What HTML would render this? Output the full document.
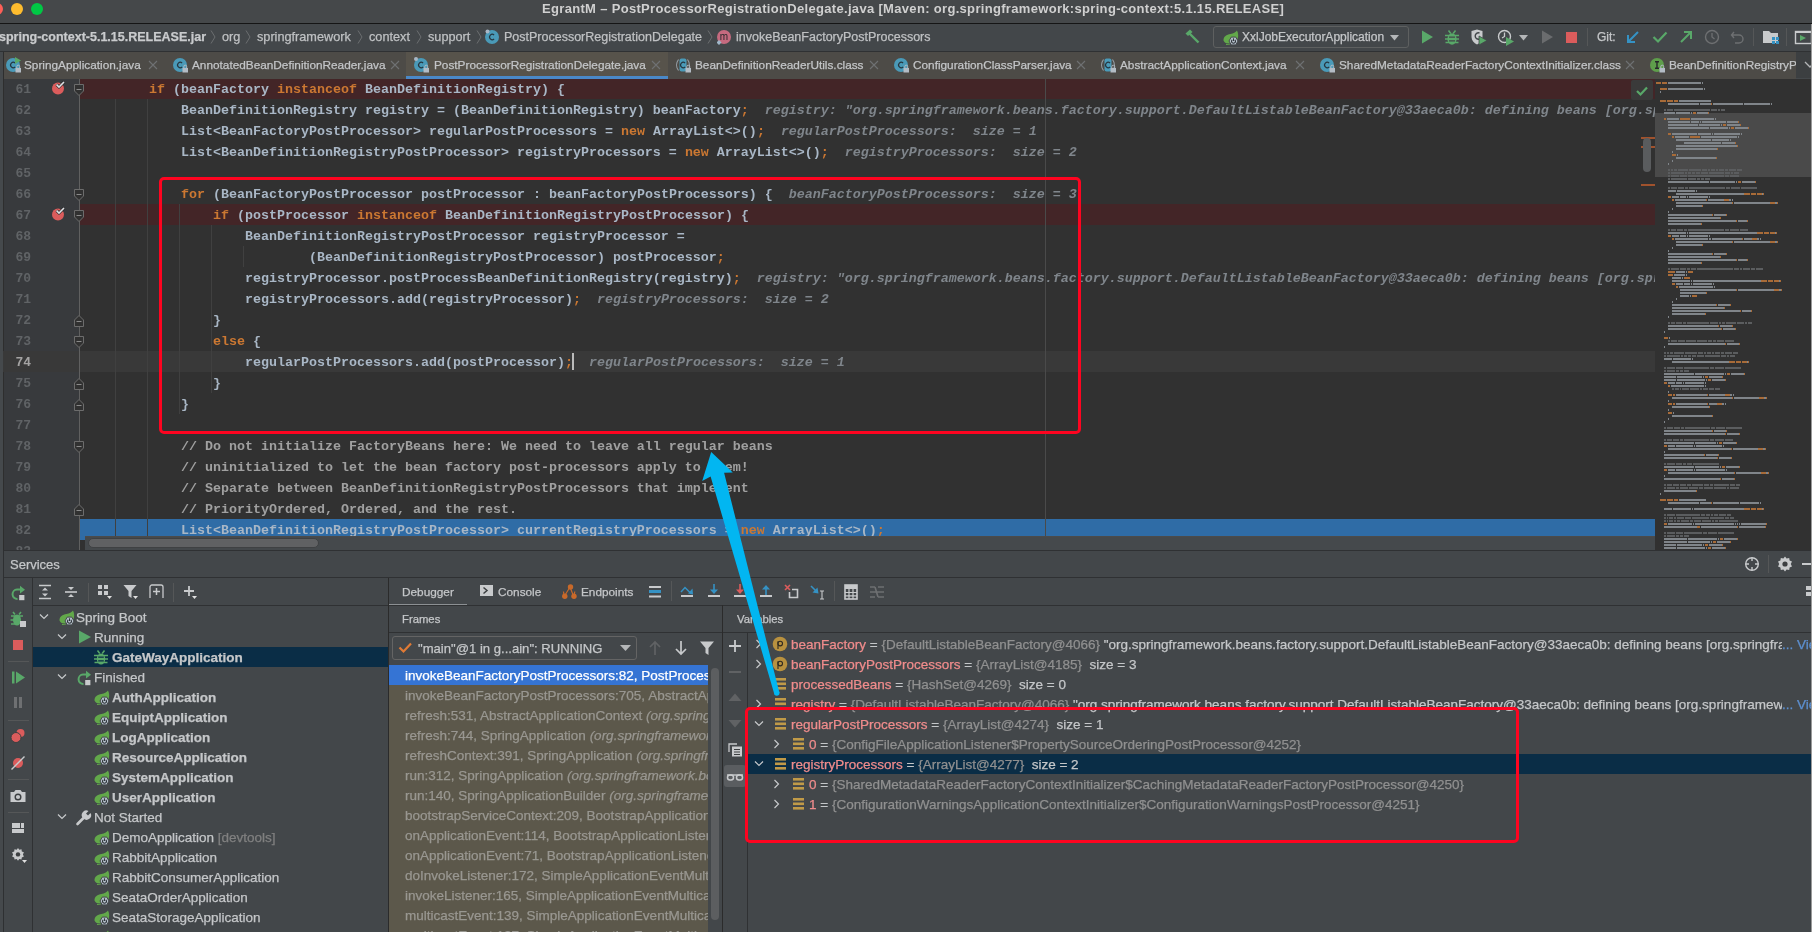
<!DOCTYPE html><html><head><meta charset="utf-8"><style>
*{box-sizing:border-box;margin:0;padding:0}
html,body{width:1812px;height:932px;overflow:hidden;background:#3c3f41}
body{will-change:transform;position:relative;font-family:"Liberation Sans",sans-serif;font-size:13px;color:#bbbbbb}
.a{position:absolute}
.t{position:absolute;white-space:pre;line-height:16px;-webkit-text-stroke:0.25px currentColor}
.mono{font-family:"Liberation Mono",monospace}
.code{position:absolute;left:85px;width:1570px;height:21px;line-height:23px;white-space:pre;overflow:hidden;font-family:"Liberation Mono",monospace;font-size:13.333px;color:#a9b7c6;font-weight:700}
.kw{color:#cc7832}
.cm{color:#a0a0a0}
.hint{color:#7f858b;font-style:italic}
.ln{position:absolute;left:3px;width:28px;text-align:right;height:21px;line-height:23px;font-family:"Liberation Mono",monospace;font-size:13px;font-weight:700}

</style></head><body><div class="a" style="left:0px;top:0px;width:1812px;height:23px;background:#45484a;"></div>
<div class="a" style="left:0px;top:23px;width:1812px;height:1px;background:#151515;"></div>
<div class="a" style="left:-9px;top:3px;width:12px;height:12px;border-radius:50%;background:#fe5f57"></div>
<div class="a" style="left:11px;top:3px;width:12px;height:12px;border-radius:50%;background:#febc2e"></div>
<div class="a" style="left:31px;top:3px;width:12px;height:12px;border-radius:50%;background:#00c845"></div>
<div class="t" style="left:542px;top:1px;color:#d0d0d0;font-size:13px;font-weight:700;letter-spacing:0.32px;-webkit-text-stroke:0">EgrantM – PostProcessorRegistrationDelegate.java [Maven: org.springframework:spring-context:5.1.15.RELEASE]</div>
<div class="a" style="left:0px;top:24px;width:1812px;height:27px;background:#43474a;"></div>
<div class="a" style="left:0px;top:51px;width:1812px;height:1px;background:#2f3133;"></div>
<div class="t" style="left:-1px;top:29px;color:#c9cbcd;font-size:12.5px;font-weight:700;">spring-context-5.1.15.RELEASE.jar</div>
<svg class="a" style="left:210px;top:29px" width="7" height="16" viewBox="0 0 7 16"><path d="M1,1.5 L5,8 L1,14.5" fill="none" stroke="#6b6e70" stroke-width="1"/></svg>
<div class="t" style="left:222px;top:29px;color:#bfc1c3;font-size:12.7px;font-weight:400;">org</div>
<svg class="a" style="left:245px;top:29px" width="7" height="16" viewBox="0 0 7 16"><path d="M1,1.5 L5,8 L1,14.5" fill="none" stroke="#6b6e70" stroke-width="1"/></svg>
<div class="t" style="left:257px;top:29px;color:#bfc1c3;font-size:12.7px;font-weight:400;">springframework</div>
<svg class="a" style="left:357px;top:29px" width="7" height="16" viewBox="0 0 7 16"><path d="M1,1.5 L5,8 L1,14.5" fill="none" stroke="#6b6e70" stroke-width="1"/></svg>
<div class="t" style="left:369px;top:29px;color:#bfc1c3;font-size:12.7px;font-weight:400;">context</div>
<svg class="a" style="left:416px;top:29px" width="7" height="16" viewBox="0 0 7 16"><path d="M1,1.5 L5,8 L1,14.5" fill="none" stroke="#6b6e70" stroke-width="1"/></svg>
<div class="t" style="left:428px;top:29px;color:#bfc1c3;font-size:12.7px;font-weight:400;">support</div>
<svg class="a" style="left:476px;top:29px" width="7" height="16" viewBox="0 0 7 16"><path d="M1,1.5 L5,8 L1,14.5" fill="none" stroke="#6b6e70" stroke-width="1"/></svg>
<svg class="a" style="left:485px;top:29px" width="17" height="16" viewBox="0 0 17 16"><circle cx="7" cy="8" r="7" fill="#4a9ab8"/><path d="M9.1,6 A2.7,2.7 0 1 0 9.1,10" fill="none" stroke="#263640" stroke-width="1.2"/><circle cx="2.5" cy="2.5" r="2" fill="#a9b7c6"/></svg>
<div class="t" style="left:504px;top:29px;color:#bfc1c3;font-size:12.5px;font-weight:400;">PostProcessorRegistrationDelegate</div>
<svg class="a" style="left:707px;top:29px" width="7" height="16" viewBox="0 0 7 16"><path d="M1,1.5 L5,8 L1,14.5" fill="none" stroke="#6b6e70" stroke-width="1"/></svg>
<svg class="a" style="left:717px;top:29px" width="17" height="16" viewBox="0 0 17 16"><circle cx="7" cy="8" r="7" fill="#c56a7f"/><text x="7" y="11" font-size="10" text-anchor="middle" fill="#26282a" font-family="Liberation Sans">m</text><path d="M2,11 L4.5,13.5 L2,16 L-0.5,13.5Z" fill="#9fb7c9"/></svg>
<div class="t" style="left:736px;top:29px;color:#bfc1c3;font-size:12.5px;font-weight:400;">invokeBeanFactoryPostProcessors</div>
<svg class="a" style="left:1184px;top:28px" width="18" height="18" viewBox="0 0 18 18"><path d="M1.5,5.5 L6,1.5 L8.5,4 L4,8Z" fill="#59a869"/><path d="M5.5,5.5 L14.5,14.5" stroke="#59a869" stroke-width="2.4"/></svg>
<div class="a" style="left:1213px;top:26px;width:196px;height:22px;border:1px solid #5e6060;border-radius:3px"></div>
<svg class="a" style="left:1222px;top:29px" width="18" height="18" viewBox="0 0 18 18"><path d="M1.5,11.5 C1.5,7.5 4.5,5.5 8.5,5 C11.5,4.5 13.5,3.5 15,1.5 C16.5,4.5 16.5,8 15.5,10 L9,13 C7,15 3,15 1.5,11.5 Z" fill="#62a84a"/><path d="M4,15.5 L8,15" stroke="#62a84a" stroke-width="1"/><path d="M7,12 L9.25,8.1 L13.75,8.1 L16,12 L13.75,15.9 L9.25,15.9Z" fill="#b4c0ca" stroke="#43474a" stroke-width="1"/><path d="M10.2,10.8 A2,2 0 1 0 12.8,10.8" fill="none" stroke="#30343a" stroke-width="1.1"/><path d="M11.5,9.3 V12" stroke="#30343a" stroke-width="1.1"/></svg>
<div class="t" style="left:1242px;top:29px;color:#c5c7c9;font-size:12px;font-weight:400;">XxlJobExecutorApplication</div>
<svg class="a" style="left:1389px;top:34px" width="12" height="8" viewBox="0 0 12 8"><path d="M1,1 H10 L5.5,6.5Z" fill="#b4b6b8"/></svg>
<svg class="a" style="left:1418px;top:28px" width="18" height="18" viewBox="0 0 18 18"><path d="M4,2.5 L15,9 L4,15.5Z" fill="#59a869"/></svg>
<svg class="a" style="left:1444px;top:29px" width="17" height="17" viewBox="0 0 17 17"><ellipse cx="8" cy="10" rx="4.6" ry="5.8" fill="#59a869"/><path d="M1,6.5 H15 M1,10 H15 M1.5,13.5 H14.5" stroke="#59a869" stroke-width="1.7"/><path d="M4.5,1.5 L6.8,4.5 M11.5,1.5 L9.2,4.5" stroke="#59a869" stroke-width="1.5"/><path d="M5,8.2 H11 M5,11.8 H11" stroke="#43474a" stroke-width="1.2"/></svg>
<svg class="a" style="left:1470px;top:28px" width="20" height="18" viewBox="0 0 20 18"><path d="M1.5,3 L7,1.5 L12.5,3 V9 C12.5,12.5 10,15 7,16.5 C4,15 1.5,12.5 1.5,9 Z" fill="#c8cacc"/><path d="M9.5,5 A3.2,3.2 0 1 0 9.5,11" fill="none" stroke="#43474a" stroke-width="1.4"/><path d="M9,8 L17,12.5 L9,17Z" fill="#59a869" stroke="#43474a" stroke-width="0.8"/></svg>
<svg class="a" style="left:1497px;top:28px" width="20" height="18" viewBox="0 0 20 18"><circle cx="7.5" cy="8.5" r="6" fill="none" stroke="#c8cacc" stroke-width="1.4"/><path d="M7.5,4.5 V8.5 L5,10" fill="none" stroke="#c8cacc" stroke-width="1.3"/><path d="M9,9 L17,13.5 L9,18Z" fill="#59a869"/></svg>
<svg class="a" style="left:1518px;top:34px" width="12" height="8" viewBox="0 0 12 8"><path d="M1,1 H10 L5.5,6.5Z" fill="#b4b6b8"/></svg>
<svg class="a" style="left:1538px;top:28px" width="18" height="18" viewBox="0 0 18 18"><path d="M4,2.5 L15,9 L4,15.5Z" fill="#6a6c6e"/></svg>
<div class="a" style="left:1566px;top:32px;width:11px;height:11px;background:#db5c5c;"></div>
<div class="a" style="left:1587px;top:28px;width:1px;height:18px;background:#555758;"></div>
<div class="t" style="left:1597px;top:29px;color:#c5c7c9;font-size:12px;font-weight:400;">Git:</div>
<svg class="a" style="left:1624px;top:28px" width="18" height="18" viewBox="0 0 18 18"><path d="M14,4 L4,14 M4,7 V14 H11" fill="none" stroke="#3592c4" stroke-width="2"/></svg>
<svg class="a" style="left:1651px;top:28px" width="18" height="18" viewBox="0 0 18 18"><path d="M2.5,9 L7,13.5 L15.5,4.5" fill="none" stroke="#59a869" stroke-width="2.2"/></svg>
<svg class="a" style="left:1677px;top:28px" width="18" height="18" viewBox="0 0 18 18"><path d="M4,14 L14,4 M7,4 H14 V11" fill="none" stroke="#59a869" stroke-width="2"/></svg>
<svg class="a" style="left:1703px;top:28px" width="18" height="18" viewBox="0 0 18 18"><circle cx="9" cy="9" r="6.5" fill="none" stroke="#6e7072" stroke-width="1.4"/><path d="M9,5 V9 L11.5,11" fill="none" stroke="#6e7072" stroke-width="1.3"/></svg>
<svg class="a" style="left:1729px;top:28px" width="18" height="18" viewBox="0 0 18 18"><path d="M5,4 L2.5,7 L5,10 M3,7 H10 A4,4 0 0 1 10,15 H6" fill="none" stroke="#6e7072" stroke-width="1.4"/></svg>
<div class="a" style="left:1753px;top:28px;width:1px;height:18px;background:#555758;"></div>
<svg class="a" style="left:1761px;top:28px" width="20" height="18" viewBox="0 0 20 18"><path d="M2,3 H8 L10,5 H17 V15 H2 Z" fill="#c8cacc"/><rect x="11" y="9" width="3" height="3" fill="#3592c4"/><rect x="15" y="9" width="3" height="3" fill="#3592c4"/><rect x="11" y="13" width="3" height="3" fill="#3592c4"/><rect x="15" y="13" width="3" height="3" fill="#3592c4"/></svg>
<div class="a" style="left:1786px;top:28px;width:1px;height:18px;background:#555758;"></div>
<svg class="a" style="left:1794px;top:28px" width="18" height="18" viewBox="0 0 18 18"><rect x="1.5" y="3.5" width="16" height="12" fill="none" stroke="#c8cacc" stroke-width="1.4"/><rect x="1" y="3" width="17" height="2" fill="#c8cacc"/><path d="M6,7 L12,10 L6,13Z" fill="#59a869"/></svg>
<div class="a" style="left:0px;top:52px;width:1812px;height:26px;background:#4d4b47;"></div>
<div class="a" style="left:0px;top:52px;width:3px;height:26px;background:#45494c;"></div>
<div class="a" style="left:3px;top:52px;width:1px;height:26px;background:#2e2e2e;"></div>
<div class="a" style="left:1796px;top:52px;width:15px;height:26px;background:#3c3f41;"></div>
<div class="a" style="left:406px;top:52px;width:262px;height:26px;background:#57534b;"></div>
<div class="a" style="left:406px;top:76px;width:262px;height:3px;background:#4a88c7;"></div>
<svg class="a" style="left:6px;top:57px" width="17" height="16" viewBox="0 0 17 16"><circle cx="7" cy="8" r="7" fill="#4a9ab8"/><path d="M9.1,6 A2.7,2.7 0 1 0 9.1,10" fill="none" stroke="#263640" stroke-width="1.2"/><path d="M9,0 L15,3.5 L9,7Z" fill="#59a869"/><rect x="9.5" y="11" width="5.5" height="4.5" fill="#b3bcc5"/><path d="M10.8,11.2 V9.6 a1.45,1.45 0 0 1 2.9,0 V11.2" fill="none" stroke="#b3bcc5" stroke-width="1"/></svg>
<div class="t" style="left:24px;top:57px;color:#c3c5c7;font-size:11.8px;font-weight:400;">SpringApplication.java</div>
<svg class="a" style="left:148px;top:60px" width="10" height="10" viewBox="0 0 10 10"><path d="M1,1 L9,9 M9,1 L1,9" stroke="#6f7173" stroke-width="1.1"/></svg>
<svg class="a" style="left:173px;top:57px" width="17" height="16" viewBox="0 0 17 16"><circle cx="7" cy="8" r="7" fill="#4a9ab8"/><path d="M9.1,6 A2.7,2.7 0 1 0 9.1,10" fill="none" stroke="#263640" stroke-width="1.2"/><rect x="9.5" y="11" width="5.5" height="4.5" fill="#b3bcc5"/><path d="M10.8,11.2 V9.6 a1.45,1.45 0 0 1 2.9,0 V11.2" fill="none" stroke="#b3bcc5" stroke-width="1"/></svg>
<div class="t" style="left:192px;top:57px;color:#c3c5c7;font-size:11.8px;font-weight:400;">AnnotatedBeanDefinitionReader.java</div>
<svg class="a" style="left:390px;top:60px" width="10" height="10" viewBox="0 0 10 10"><path d="M1,1 L9,9 M9,1 L1,9" stroke="#6f7173" stroke-width="1.1"/></svg>
<svg class="a" style="left:414px;top:57px" width="17" height="16" viewBox="0 0 17 16"><circle cx="7" cy="8" r="7" fill="#4a9ab8"/><path d="M9.1,6 A2.7,2.7 0 1 0 9.1,10" fill="none" stroke="#263640" stroke-width="1.2"/><circle cx="2" cy="2" r="2" fill="#a9b7c6"/><rect x="9.5" y="11" width="5.5" height="4.5" fill="#b3bcc5"/><path d="M10.8,11.2 V9.6 a1.45,1.45 0 0 1 2.9,0 V11.2" fill="none" stroke="#b3bcc5" stroke-width="1"/></svg>
<div class="t" style="left:434px;top:57px;color:#c3c5c7;font-size:11.8px;font-weight:400;">PostProcessorRegistrationDelegate.java</div>
<svg class="a" style="left:651px;top:60px" width="10" height="10" viewBox="0 0 10 10"><path d="M1,1 L9,9 M9,1 L1,9" stroke="#6f7173" stroke-width="1.1"/></svg>
<svg class="a" style="left:676px;top:57px" width="17" height="16" viewBox="0 0 17 16"><circle cx="7" cy="8" r="7" fill="#4a9ab8"/><path d="M9.1,6 A2.7,2.7 0 1 0 9.1,10" fill="none" stroke="#263640" stroke-width="1.2"/><rect x="-1" y="0" width="16" height="16" fill="#4d4b47"/><path d="M2.5,2.5 A9,9 0 0 0 2.5,13.5 M11.5,2.5 A9,9 0 0 1 11.5,13.5" fill="none" stroke="#9aa3ab" stroke-width="1.1"/><rect x="3.5" y="1.5" width="7" height="13" rx="2" fill="#4a9ab8"/><path d="M9.1,6 A2.7,2.7 0 1 0 9.1,10" fill="none" stroke="#263640" stroke-width="1.2"/><rect x="9.5" y="11" width="5.5" height="4.5" fill="#b3bcc5"/><path d="M10.8,11.2 V9.6 a1.45,1.45 0 0 1 2.9,0 V11.2" fill="none" stroke="#b3bcc5" stroke-width="1"/></svg>
<div class="t" style="left:695px;top:57px;color:#c3c5c7;font-size:11.8px;font-weight:400;">BeanDefinitionReaderUtils.class</div>
<svg class="a" style="left:869px;top:60px" width="10" height="10" viewBox="0 0 10 10"><path d="M1,1 L9,9 M9,1 L1,9" stroke="#6f7173" stroke-width="1.1"/></svg>
<svg class="a" style="left:894px;top:57px" width="17" height="16" viewBox="0 0 17 16"><circle cx="7" cy="8" r="7" fill="#4a9ab8"/><path d="M9.1,6 A2.7,2.7 0 1 0 9.1,10" fill="none" stroke="#263640" stroke-width="1.2"/><rect x="9.5" y="11" width="5.5" height="4.5" fill="#b3bcc5"/><path d="M10.8,11.2 V9.6 a1.45,1.45 0 0 1 2.9,0 V11.2" fill="none" stroke="#b3bcc5" stroke-width="1"/></svg>
<div class="t" style="left:913px;top:57px;color:#c3c5c7;font-size:11.8px;font-weight:400;">ConfigurationClassParser.java</div>
<svg class="a" style="left:1076px;top:60px" width="10" height="10" viewBox="0 0 10 10"><path d="M1,1 L9,9 M9,1 L1,9" stroke="#6f7173" stroke-width="1.1"/></svg>
<svg class="a" style="left:1101px;top:57px" width="17" height="16" viewBox="0 0 17 16"><circle cx="7" cy="8" r="7" fill="#4a9ab8"/><path d="M9.1,6 A2.7,2.7 0 1 0 9.1,10" fill="none" stroke="#263640" stroke-width="1.2"/><rect x="-1" y="0" width="16" height="16" fill="#4d4b47"/><path d="M2.5,2.5 A9,9 0 0 0 2.5,13.5 M11.5,2.5 A9,9 0 0 1 11.5,13.5" fill="none" stroke="#9aa3ab" stroke-width="1.1"/><rect x="3.5" y="1.5" width="7" height="13" rx="2" fill="#4a9ab8"/><path d="M9.1,6 A2.7,2.7 0 1 0 9.1,10" fill="none" stroke="#263640" stroke-width="1.2"/><rect x="9.5" y="11" width="5.5" height="4.5" fill="#b3bcc5"/><path d="M10.8,11.2 V9.6 a1.45,1.45 0 0 1 2.9,0 V11.2" fill="none" stroke="#b3bcc5" stroke-width="1"/></svg>
<div class="t" style="left:1120px;top:57px;color:#c3c5c7;font-size:11.8px;font-weight:400;">AbstractApplicationContext.java</div>
<svg class="a" style="left:1295px;top:60px" width="10" height="10" viewBox="0 0 10 10"><path d="M1,1 L9,9 M9,1 L1,9" stroke="#6f7173" stroke-width="1.1"/></svg>
<svg class="a" style="left:1320px;top:57px" width="17" height="16" viewBox="0 0 17 16"><circle cx="7" cy="8" r="7" fill="#4a9ab8"/><path d="M9.1,6 A2.7,2.7 0 1 0 9.1,10" fill="none" stroke="#263640" stroke-width="1.2"/><rect x="9.5" y="11" width="5.5" height="4.5" fill="#b3bcc5"/><path d="M10.8,11.2 V9.6 a1.45,1.45 0 0 1 2.9,0 V11.2" fill="none" stroke="#b3bcc5" stroke-width="1"/></svg>
<div class="t" style="left:1339px;top:57px;color:#c3c5c7;font-size:11.8px;font-weight:400;">SharedMetadataReaderFactoryContextInitializer.class</div>
<svg class="a" style="left:1625px;top:60px" width="10" height="10" viewBox="0 0 10 10"><path d="M1,1 L9,9 M9,1 L1,9" stroke="#6f7173" stroke-width="1.1"/></svg>
<div class="a" style="left:1650px;top:52px;width:146px;height:26px;overflow:hidden"><svg class="a" style="left:0px;top:5px" width="17" height="16" viewBox="0 0 17 16"><circle cx="7" cy="8" r="7" fill="#5e9e4b"/><path d="M5,4.8 H9 M7,4.8 V11.2 M5,11.2 H9" fill="none" stroke="#26282a" stroke-width="1.4"/><rect x="9.5" y="11" width="5.5" height="4.5" fill="#b3bcc5"/><path d="M10.8,11.2 V9.6 a1.45,1.45 0 0 1 2.9,0 V11.2" fill="none" stroke="#b3bcc5" stroke-width="1"/></svg><div class="t" style="left:19px;top:5px;color:#c3c5c7;font-size:11.8px">BeanDefinitionRegistryPostProcessor.class</div></div>
<svg class="a" style="left:1804px;top:60px" width="12" height="10" viewBox="0 0 12 10"><path d="M1,2 L6,7 L11,2" fill="none" stroke="#b4b6b8" stroke-width="1.3"/></svg>
<div class="a" style="left:0px;top:79px;width:3px;height:471px;background:#45494c;"></div>
<div class="a" style="left:3px;top:79px;width:1px;height:471px;background:#2e2e2e;"></div>
<div class="a" style="left:4px;top:79px;width:76px;height:471px;background:#383a3d;"></div>
<div class="a" style="left:80px;top:79px;width:1575px;height:471px;background:#313131;"></div>
<div class="a" style="left:1655px;top:79px;width:157px;height:471px;background:#313131;"></div>
<div class="a" style="left:80px;top:78px;width:1575px;height:21px;background:#432527;"></div>
<div class="a" style="left:80px;top:204px;width:1575px;height:21px;background:#432527;"></div>
<div class="a" style="left:3px;top:351px;width:1652px;height:21px;background:#393939;"></div>
<div class="a" style="left:80px;top:519px;width:1575px;height:21px;background:#2f6ca6;"></div>
<div class="a" style="left:115px;top:99px;width:1px;height:441px;background:#404040;"></div>
<div class="a" style="left:147px;top:99px;width:1px;height:441px;background:#404040;"></div>
<div class="a" style="left:179px;top:204px;width:1px;height:210px;background:#404040;"></div>
<div class="a" style="left:211px;top:225px;width:1px;height:168px;background:#404040;"></div>
<div class="a" style="left:243px;top:246px;width:1px;height:21px;background:#404040;"></div>
<div class="a" style="left:1045px;top:79px;width:1px;height:458px;background:#4a4a4a;"></div>
<div class="code" style="top:78px">        <span class="kw">if</span> (beanFactory <span class="kw">instanceof</span> BeanDefinitionRegistry) {</div>
<div class="ln" style="top:78px;color:#606366">61</div>
<div class="code" style="top:99px">            BeanDefinitionRegistry registry = (BeanDefinitionRegistry) beanFactory<span class="kw">;</span>  <span class="hint">registry: &quot;org.springframework.beans.factory.support.DefaultListableBeanFactory@33aeca0b: defining beans [org.springframework.context.annotation.internalConfigurationAnnotationProcessor</span></div>
<div class="ln" style="top:99px;color:#606366">62</div>
<div class="code" style="top:120px">            List&lt;BeanFactoryPostProcessor&gt; regularPostProcessors = <span class="kw">new</span> ArrayList&lt;&gt;()<span class="kw">;</span>  <span class="hint">regularPostProcessors:  size = 1</span></div>
<div class="ln" style="top:120px;color:#606366">63</div>
<div class="code" style="top:141px">            List&lt;BeanDefinitionRegistryPostProcessor&gt; registryProcessors = <span class="kw">new</span> ArrayList&lt;&gt;()<span class="kw">;</span>  <span class="hint">registryProcessors:  size = 2</span></div>
<div class="ln" style="top:141px;color:#606366">64</div>
<div class="code" style="top:162px"></div>
<div class="ln" style="top:162px;color:#606366">65</div>
<div class="code" style="top:183px">            <span class="kw">for</span> (BeanFactoryPostProcessor postProcessor : beanFactoryPostProcessors) {  <span class="hint">beanFactoryPostProcessors:  size = 3</span></div>
<div class="ln" style="top:183px;color:#606366">66</div>
<div class="code" style="top:204px">                <span class="kw">if</span> (postProcessor <span class="kw">instanceof</span> BeanDefinitionRegistryPostProcessor) {</div>
<div class="ln" style="top:204px;color:#606366">67</div>
<div class="code" style="top:225px">                    BeanDefinitionRegistryPostProcessor registryProcessor =</div>
<div class="ln" style="top:225px;color:#606366">68</div>
<div class="code" style="top:246px">                            (BeanDefinitionRegistryPostProcessor) postProcessor<span class="kw">;</span></div>
<div class="ln" style="top:246px;color:#606366">69</div>
<div class="code" style="top:267px">                    registryProcessor.postProcessBeanDefinitionRegistry(registry)<span class="kw">;</span>  <span class="hint">registry: &quot;org.springframework.beans.factory.support.DefaultListableBeanFactory@33aeca0b: defining beans [org.springframework.context.annotation.internalConfigurationAnnotationProcessor</span></div>
<div class="ln" style="top:267px;color:#606366">70</div>
<div class="code" style="top:288px">                    registryProcessors.add(registryProcessor)<span class="kw">;</span>  <span class="hint">registryProcessors:  size = 2</span></div>
<div class="ln" style="top:288px;color:#606366">71</div>
<div class="code" style="top:309px">                }</div>
<div class="ln" style="top:309px;color:#606366">72</div>
<div class="code" style="top:330px">                <span class="kw">else</span> {</div>
<div class="ln" style="top:330px;color:#606366">73</div>
<div class="code" style="top:351px">                    regularPostProcessors.add(postProcessor)<span class="kw">;</span>  <span class="hint">regularPostProcessors:  size = 1</span></div>
<div class="ln" style="top:351px;color:#a4a3a3">74</div>
<div class="code" style="top:372px">                }</div>
<div class="ln" style="top:372px;color:#606366">75</div>
<div class="code" style="top:393px">            }</div>
<div class="ln" style="top:393px;color:#606366">76</div>
<div class="code" style="top:414px"></div>
<div class="ln" style="top:414px;color:#606366">77</div>
<div class="code" style="top:435px"><span class="cm">            // Do not initialize FactoryBeans here: We need to leave all regular beans</span></div>
<div class="ln" style="top:435px;color:#606366">78</div>
<div class="code" style="top:456px"><span class="cm">            // uninitialized to let the bean factory post-processors apply to them!</span></div>
<div class="ln" style="top:456px;color:#606366">79</div>
<div class="code" style="top:477px"><span class="cm">            // Separate between BeanDefinitionRegistryPostProcessors that implement</span></div>
<div class="ln" style="top:477px;color:#606366">80</div>
<div class="code" style="top:498px"><span class="cm">            // PriorityOrdered, Ordered, and the rest.</span></div>
<div class="ln" style="top:498px;color:#606366">81</div>
<div class="code" style="top:519px">            List&lt;BeanDefinitionRegistryPostProcessor&gt; currentRegistryProcessors = <span class="kw">new</span> ArrayList&lt;&gt;()<span class="kw">;</span></div>
<div class="ln" style="top:519px;color:#606366">82</div>
<div class="code" style="top:540px"></div>
<div class="ln" style="top:540px;color:#606366">83</div>
<div class="a" style="left:79px;top:79px;width:1px;height:471px;background:#606060;"></div>
<svg class="a" style="left:74px;top:84px" width="10" height="12"><path d="M0.5,0.5 H9.5 V7 L5,11.5 L0.5,7 Z" fill="#313131" stroke="#6c6c6c" stroke-width="1"/><rect x="2.5" y="5" width="5" height="1" fill="#8a8a8a"/></svg>
<svg class="a" style="left:74px;top:189px" width="10" height="12"><path d="M0.5,0.5 H9.5 V7 L5,11.5 L0.5,7 Z" fill="#313131" stroke="#6c6c6c" stroke-width="1"/><rect x="2.5" y="5" width="5" height="1" fill="#8a8a8a"/></svg>
<svg class="a" style="left:74px;top:210px" width="10" height="12"><path d="M0.5,0.5 H9.5 V7 L5,11.5 L0.5,7 Z" fill="#313131" stroke="#6c6c6c" stroke-width="1"/><rect x="2.5" y="5" width="5" height="1" fill="#8a8a8a"/></svg>
<svg class="a" style="left:74px;top:336px" width="10" height="12"><path d="M0.5,0.5 H9.5 V7 L5,11.5 L0.5,7 Z" fill="#313131" stroke="#6c6c6c" stroke-width="1"/><rect x="2.5" y="5" width="5" height="1" fill="#8a8a8a"/></svg>
<svg class="a" style="left:74px;top:441px" width="10" height="12"><path d="M0.5,0.5 H9.5 V7 L5,11.5 L0.5,7 Z" fill="#313131" stroke="#6c6c6c" stroke-width="1"/><rect x="2.5" y="5" width="5" height="1" fill="#8a8a8a"/></svg>
<svg class="a" style="left:74px;top:315px" width="10" height="12"><path d="M0.5,11.5 H9.5 V5 L5,0.5 L0.5,5 Z" fill="#313131" stroke="#6c6c6c" stroke-width="1"/><rect x="2.5" y="6" width="5" height="1" fill="#8a8a8a"/></svg>
<svg class="a" style="left:74px;top:378px" width="10" height="12"><path d="M0.5,11.5 H9.5 V5 L5,0.5 L0.5,5 Z" fill="#313131" stroke="#6c6c6c" stroke-width="1"/><rect x="2.5" y="6" width="5" height="1" fill="#8a8a8a"/></svg>
<svg class="a" style="left:74px;top:399px" width="10" height="12"><path d="M0.5,11.5 H9.5 V5 L5,0.5 L0.5,5 Z" fill="#313131" stroke="#6c6c6c" stroke-width="1"/><rect x="2.5" y="6" width="5" height="1" fill="#8a8a8a"/></svg>
<svg class="a" style="left:74px;top:504px" width="10" height="12"><path d="M0.5,11.5 H9.5 V5 L5,0.5 L0.5,5 Z" fill="#313131" stroke="#6c6c6c" stroke-width="1"/><rect x="2.5" y="6" width="5" height="1" fill="#8a8a8a"/></svg>
<svg class="a" style="left:50px;top:79px" width="18" height="18"><circle cx="8" cy="9.5" r="6" fill="#db5c5c"/><path d="M6.6,5.6 L9,8 L14,3" fill="none" stroke="#2b2b2b" stroke-width="3"/><path d="M6.6,5.6 L9,8 L14,3" fill="none" stroke="#dfe1e5" stroke-width="1.6"/></svg>
<svg class="a" style="left:50px;top:205px" width="18" height="18"><circle cx="8" cy="9.5" r="6" fill="#db5c5c"/><path d="M6.6,5.6 L9,8 L14,3" fill="none" stroke="#2b2b2b" stroke-width="3"/><path d="M6.6,5.6 L9,8 L14,3" fill="none" stroke="#dfe1e5" stroke-width="1.6"/></svg>
<div class="a" style="left:572px;top:353px;width:2px;height:17px;background:#bbbbbb;"></div>
<div class="a" style="left:0px;top:78px;width:3px;height:1px;background:#45494c;"></div>
<div class="a" style="left:3px;top:78px;width:1px;height:1px;background:#2e2e2e;"></div>
<div class="a" style="left:4px;top:78px;width:1792px;height:1px;background:#4d4b47;"></div>
<div class="a" style="left:1796px;top:78px;width:15px;height:1px;background:#45494c;"></div>
<div class="a" style="left:406px;top:78px;width:262px;height:1px;background:#4a88c7;"></div>
<svg class="a" style="left:0;top:0" width="1812" height="550"><rect x="1655" y="113" width="156" height="64" fill="#4a4a4a"/><rect x="1656" y="82" width="5" height="2" fill="#a86b38"/><rect x="1662" y="82" width="5" height="2" fill="#a86b38"/><rect x="1668" y="82" width="33" height="2" fill="#80858a"/><rect x="1702" y="82" width="1" height="2" fill="#80858a"/><rect x="1660" y="88" width="7" height="2" fill="#a86b38"/><rect x="1668" y="88" width="35" height="2" fill="#80858a"/><rect x="1704" y="88" width="1" height="2" fill="#80858a"/><rect x="1660" y="91" width="1" height="2" fill="#80858a"/><rect x="1660" y="100" width="6" height="2" fill="#a86b38"/><rect x="1667" y="100" width="6" height="2" fill="#a86b38"/><rect x="1674" y="100" width="4" height="2" fill="#a86b38"/><rect x="1679" y="100" width="32" height="2" fill="#80858a"/><rect x="1668" y="103" width="31" height="2" fill="#80858a"/><rect x="1700" y="103" width="11" height="2" fill="#80858a"/><rect x="1711" y="103" width="1" height="2" fill="#a86b38"/><rect x="1713" y="103" width="30" height="2" fill="#80858a"/><rect x="1744" y="103" width="26" height="2" fill="#80858a"/><rect x="1771" y="103" width="1" height="2" fill="#80858a"/><rect x="1664" y="109" width="2" height="2" fill="#5b5d5f"/><rect x="1667" y="109" width="6" height="2" fill="#5b5d5f"/><rect x="1674" y="109" width="36" height="2" fill="#5b5d5f"/><rect x="1711" y="109" width="6" height="2" fill="#5b5d5f"/><rect x="1718" y="109" width="2" height="2" fill="#5b5d5f"/><rect x="1721" y="109" width="4" height="2" fill="#5b5d5f"/><rect x="1664" y="112" width="11" height="2" fill="#80858a"/><rect x="1676" y="112" width="14" height="2" fill="#80858a"/><rect x="1691" y="112" width="1" height="2" fill="#80858a"/><rect x="1693" y="112" width="3" height="2" fill="#a86b38"/><rect x="1697" y="112" width="11" height="2" fill="#80858a"/><rect x="1708" y="112" width="1" height="2" fill="#a86b38"/><rect x="1664" y="118" width="2" height="2" fill="#a86b38"/><rect x="1667" y="118" width="12" height="2" fill="#80858a"/><rect x="1680" y="118" width="10" height="2" fill="#a86b38"/><rect x="1691" y="118" width="23" height="2" fill="#80858a"/><rect x="1715" y="118" width="1" height="2" fill="#80858a"/><rect x="1668" y="121" width="22" height="2" fill="#80858a"/><rect x="1691" y="121" width="8" height="2" fill="#80858a"/><rect x="1700" y="121" width="1" height="2" fill="#80858a"/><rect x="1702" y="121" width="24" height="2" fill="#80858a"/><rect x="1727" y="121" width="11" height="2" fill="#80858a"/><rect x="1738" y="121" width="1" height="2" fill="#a86b38"/><rect x="1668" y="124" width="30" height="2" fill="#80858a"/><rect x="1699" y="124" width="21" height="2" fill="#80858a"/><rect x="1721" y="124" width="1" height="2" fill="#80858a"/><rect x="1723" y="124" width="3" height="2" fill="#a86b38"/><rect x="1727" y="124" width="13" height="2" fill="#80858a"/><rect x="1740" y="124" width="1" height="2" fill="#a86b38"/><rect x="1668" y="127" width="41" height="2" fill="#80858a"/><rect x="1710" y="127" width="18" height="2" fill="#80858a"/><rect x="1729" y="127" width="1" height="2" fill="#80858a"/><rect x="1731" y="127" width="3" height="2" fill="#a86b38"/><rect x="1735" y="127" width="13" height="2" fill="#80858a"/><rect x="1748" y="127" width="1" height="2" fill="#a86b38"/><rect x="1668" y="133" width="3" height="2" fill="#a86b38"/><rect x="1672" y="133" width="25" height="2" fill="#80858a"/><rect x="1698" y="133" width="13" height="2" fill="#80858a"/><rect x="1712" y="133" width="1" height="2" fill="#80858a"/><rect x="1714" y="133" width="26" height="2" fill="#80858a"/><rect x="1741" y="133" width="1" height="2" fill="#80858a"/><rect x="1672" y="136" width="2" height="2" fill="#a86b38"/><rect x="1675" y="136" width="14" height="2" fill="#80858a"/><rect x="1690" y="136" width="10" height="2" fill="#a86b38"/><rect x="1701" y="136" width="36" height="2" fill="#80858a"/><rect x="1738" y="136" width="1" height="2" fill="#80858a"/><rect x="1676" y="139" width="35" height="2" fill="#80858a"/><rect x="1712" y="139" width="17" height="2" fill="#80858a"/><rect x="1730" y="139" width="1" height="2" fill="#80858a"/><rect x="1684" y="142" width="37" height="2" fill="#80858a"/><rect x="1722" y="142" width="13" height="2" fill="#80858a"/><rect x="1735" y="142" width="1" height="2" fill="#a86b38"/><rect x="1676" y="145" width="61" height="2" fill="#80858a"/><rect x="1737" y="145" width="1" height="2" fill="#a86b38"/><rect x="1676" y="148" width="41" height="2" fill="#80858a"/><rect x="1717" y="148" width="1" height="2" fill="#a86b38"/><rect x="1672" y="151" width="1" height="2" fill="#80858a"/><rect x="1672" y="154" width="4" height="2" fill="#a86b38"/><rect x="1677" y="154" width="1" height="2" fill="#80858a"/><rect x="1676" y="157" width="40" height="2" fill="#80858a"/><rect x="1716" y="157" width="1" height="2" fill="#a86b38"/><rect x="1672" y="160" width="1" height="2" fill="#80858a"/><rect x="1668" y="163" width="1" height="2" fill="#80858a"/><rect x="1668" y="169" width="2" height="2" fill="#5b5d5f"/><rect x="1671" y="169" width="2" height="2" fill="#5b5d5f"/><rect x="1674" y="169" width="3" height="2" fill="#5b5d5f"/><rect x="1678" y="169" width="10" height="2" fill="#5b5d5f"/><rect x="1689" y="169" width="12" height="2" fill="#5b5d5f"/><rect x="1702" y="169" width="5" height="2" fill="#5b5d5f"/><rect x="1708" y="169" width="2" height="2" fill="#5b5d5f"/><rect x="1711" y="169" width="4" height="2" fill="#5b5d5f"/><rect x="1716" y="169" width="2" height="2" fill="#5b5d5f"/><rect x="1719" y="169" width="5" height="2" fill="#5b5d5f"/><rect x="1725" y="169" width="3" height="2" fill="#5b5d5f"/><rect x="1729" y="169" width="7" height="2" fill="#5b5d5f"/><rect x="1737" y="169" width="5" height="2" fill="#5b5d5f"/><rect x="1668" y="172" width="2" height="2" fill="#5b5d5f"/><rect x="1671" y="172" width="13" height="2" fill="#5b5d5f"/><rect x="1685" y="172" width="2" height="2" fill="#5b5d5f"/><rect x="1688" y="172" width="3" height="2" fill="#5b5d5f"/><rect x="1692" y="172" width="3" height="2" fill="#5b5d5f"/><rect x="1696" y="172" width="4" height="2" fill="#5b5d5f"/><rect x="1701" y="172" width="7" height="2" fill="#5b5d5f"/><rect x="1709" y="172" width="15" height="2" fill="#5b5d5f"/><rect x="1725" y="172" width="5" height="2" fill="#5b5d5f"/><rect x="1731" y="172" width="2" height="2" fill="#5b5d5f"/><rect x="1734" y="172" width="5" height="2" fill="#5b5d5f"/><rect x="1668" y="175" width="2" height="2" fill="#5b5d5f"/><rect x="1671" y="175" width="8" height="2" fill="#5b5d5f"/><rect x="1680" y="175" width="7" height="2" fill="#5b5d5f"/><rect x="1688" y="175" width="36" height="2" fill="#5b5d5f"/><rect x="1725" y="175" width="4" height="2" fill="#5b5d5f"/><rect x="1730" y="175" width="9" height="2" fill="#5b5d5f"/><rect x="1668" y="178" width="2" height="2" fill="#5b5d5f"/><rect x="1671" y="178" width="16" height="2" fill="#5b5d5f"/><rect x="1688" y="178" width="8" height="2" fill="#5b5d5f"/><rect x="1697" y="178" width="3" height="2" fill="#5b5d5f"/><rect x="1701" y="178" width="3" height="2" fill="#5b5d5f"/><rect x="1705" y="178" width="5" height="2" fill="#5b5d5f"/><rect x="1668" y="181" width="41" height="2" fill="#80858a"/><rect x="1710" y="181" width="25" height="2" fill="#80858a"/><rect x="1736" y="181" width="1" height="2" fill="#80858a"/><rect x="1738" y="181" width="3" height="2" fill="#a86b38"/><rect x="1742" y="181" width="13" height="2" fill="#80858a"/><rect x="1755" y="181" width="1" height="2" fill="#a86b38"/><rect x="1668" y="187" width="2" height="2" fill="#5b5d5f"/><rect x="1671" y="187" width="6" height="2" fill="#5b5d5f"/><rect x="1678" y="187" width="6" height="2" fill="#5b5d5f"/><rect x="1685" y="187" width="3" height="2" fill="#5b5d5f"/><rect x="1689" y="187" width="36" height="2" fill="#5b5d5f"/><rect x="1726" y="187" width="4" height="2" fill="#5b5d5f"/><rect x="1731" y="187" width="9" height="2" fill="#5b5d5f"/><rect x="1741" y="187" width="16" height="2" fill="#5b5d5f"/><rect x="1668" y="190" width="8" height="2" fill="#80858a"/><rect x="1677" y="190" width="18" height="2" fill="#80858a"/><rect x="1696" y="190" width="1" height="2" fill="#80858a"/><rect x="1676" y="193" width="68" height="2" fill="#80858a"/><rect x="1744" y="193" width="6" height="2" fill="#a86b38"/><rect x="1751" y="193" width="5" height="2" fill="#a86b38"/><rect x="1757" y="193" width="5" height="2" fill="#a86b38"/><rect x="1762" y="193" width="1" height="2" fill="#80858a"/><rect x="1763" y="193" width="1" height="2" fill="#a86b38"/><rect x="1668" y="196" width="3" height="2" fill="#a86b38"/><rect x="1672" y="196" width="7" height="2" fill="#80858a"/><rect x="1680" y="196" width="6" height="2" fill="#80858a"/><rect x="1687" y="196" width="1" height="2" fill="#80858a"/><rect x="1689" y="196" width="19" height="2" fill="#80858a"/><rect x="1709" y="196" width="1" height="2" fill="#80858a"/><rect x="1672" y="199" width="2" height="2" fill="#a86b38"/><rect x="1675" y="199" width="31" height="2" fill="#80858a"/><rect x="1706" y="199" width="1" height="2" fill="#a86b38"/><rect x="1708" y="199" width="16" height="2" fill="#80858a"/><rect x="1724" y="199" width="5" height="2" fill="#a86b38"/><rect x="1729" y="199" width="2" height="2" fill="#80858a"/><rect x="1732" y="199" width="1" height="2" fill="#80858a"/><rect x="1676" y="202" width="56" height="2" fill="#80858a"/><rect x="1732" y="202" width="1" height="2" fill="#a86b38"/><rect x="1734" y="202" width="36" height="2" fill="#80858a"/><rect x="1770" y="202" width="5" height="2" fill="#a86b38"/><rect x="1775" y="202" width="2" height="2" fill="#80858a"/><rect x="1777" y="202" width="1" height="2" fill="#a86b38"/><rect x="1676" y="205" width="26" height="2" fill="#80858a"/><rect x="1702" y="205" width="1" height="2" fill="#a86b38"/><rect x="1672" y="208" width="1" height="2" fill="#80858a"/><rect x="1668" y="211" width="1" height="2" fill="#80858a"/><rect x="1668" y="214" width="44" height="2" fill="#80858a"/><rect x="1712" y="214" width="1" height="2" fill="#a86b38"/><rect x="1714" y="214" width="12" height="2" fill="#80858a"/><rect x="1726" y="214" width="1" height="2" fill="#a86b38"/><rect x="1668" y="217" width="52" height="2" fill="#80858a"/><rect x="1720" y="217" width="1" height="2" fill="#a86b38"/><rect x="1668" y="220" width="68" height="2" fill="#80858a"/><rect x="1736" y="220" width="1" height="2" fill="#a86b38"/><rect x="1738" y="220" width="9" height="2" fill="#80858a"/><rect x="1747" y="220" width="1" height="2" fill="#a86b38"/><rect x="1668" y="223" width="33" height="2" fill="#80858a"/><rect x="1701" y="223" width="1" height="2" fill="#a86b38"/><rect x="1668" y="229" width="2" height="2" fill="#5b5d5f"/><rect x="1671" y="229" width="5" height="2" fill="#5b5d5f"/><rect x="1677" y="229" width="6" height="2" fill="#5b5d5f"/><rect x="1684" y="229" width="3" height="2" fill="#5b5d5f"/><rect x="1688" y="229" width="36" height="2" fill="#5b5d5f"/><rect x="1725" y="229" width="4" height="2" fill="#5b5d5f"/><rect x="1730" y="229" width="9" height="2" fill="#5b5d5f"/><rect x="1740" y="229" width="8" height="2" fill="#5b5d5f"/><rect x="1668" y="232" width="18" height="2" fill="#80858a"/><rect x="1687" y="232" width="1" height="2" fill="#80858a"/><rect x="1689" y="232" width="68" height="2" fill="#80858a"/><rect x="1757" y="232" width="6" height="2" fill="#a86b38"/><rect x="1764" y="232" width="5" height="2" fill="#a86b38"/><rect x="1770" y="232" width="5" height="2" fill="#a86b38"/><rect x="1775" y="232" width="1" height="2" fill="#80858a"/><rect x="1776" y="232" width="1" height="2" fill="#a86b38"/><rect x="1668" y="235" width="3" height="2" fill="#a86b38"/><rect x="1672" y="235" width="7" height="2" fill="#80858a"/><rect x="1680" y="235" width="6" height="2" fill="#80858a"/><rect x="1687" y="235" width="1" height="2" fill="#80858a"/><rect x="1689" y="235" width="19" height="2" fill="#80858a"/><rect x="1709" y="235" width="1" height="2" fill="#80858a"/><rect x="1672" y="238" width="2" height="2" fill="#a86b38"/><rect x="1675" y="238" width="33" height="2" fill="#80858a"/><rect x="1709" y="238" width="2" height="2" fill="#80858a"/><rect x="1712" y="238" width="30" height="2" fill="#80858a"/><rect x="1742" y="238" width="1" height="2" fill="#a86b38"/><rect x="1744" y="238" width="8" height="2" fill="#80858a"/><rect x="1752" y="238" width="5" height="2" fill="#a86b38"/><rect x="1757" y="238" width="2" height="2" fill="#80858a"/><rect x="1760" y="238" width="1" height="2" fill="#80858a"/><rect x="1676" y="241" width="56" height="2" fill="#80858a"/><rect x="1732" y="241" width="1" height="2" fill="#a86b38"/><rect x="1734" y="241" width="36" height="2" fill="#80858a"/><rect x="1770" y="241" width="5" height="2" fill="#a86b38"/><rect x="1775" y="241" width="2" height="2" fill="#80858a"/><rect x="1777" y="241" width="1" height="2" fill="#a86b38"/><rect x="1676" y="244" width="26" height="2" fill="#80858a"/><rect x="1702" y="244" width="1" height="2" fill="#a86b38"/><rect x="1672" y="247" width="1" height="2" fill="#80858a"/><rect x="1668" y="250" width="1" height="2" fill="#80858a"/><rect x="1668" y="253" width="44" height="2" fill="#80858a"/><rect x="1712" y="253" width="1" height="2" fill="#a86b38"/><rect x="1714" y="253" width="12" height="2" fill="#80858a"/><rect x="1726" y="253" width="1" height="2" fill="#a86b38"/><rect x="1668" y="256" width="52" height="2" fill="#80858a"/><rect x="1720" y="256" width="1" height="2" fill="#a86b38"/><rect x="1668" y="259" width="68" height="2" fill="#80858a"/><rect x="1736" y="259" width="1" height="2" fill="#a86b38"/><rect x="1738" y="259" width="9" height="2" fill="#80858a"/><rect x="1747" y="259" width="1" height="2" fill="#a86b38"/><rect x="1668" y="262" width="33" height="2" fill="#80858a"/><rect x="1701" y="262" width="1" height="2" fill="#a86b38"/><rect x="1668" y="268" width="2" height="2" fill="#5b5d5f"/><rect x="1671" y="268" width="8" height="2" fill="#5b5d5f"/><rect x="1680" y="268" width="6" height="2" fill="#5b5d5f"/><rect x="1687" y="268" width="3" height="2" fill="#5b5d5f"/><rect x="1691" y="268" width="5" height="2" fill="#5b5d5f"/><rect x="1697" y="268" width="36" height="2" fill="#5b5d5f"/><rect x="1734" y="268" width="5" height="2" fill="#5b5d5f"/><rect x="1740" y="268" width="2" height="2" fill="#5b5d5f"/><rect x="1743" y="268" width="7" height="2" fill="#5b5d5f"/><rect x="1751" y="268" width="4" height="2" fill="#5b5d5f"/><rect x="1756" y="268" width="7" height="2" fill="#5b5d5f"/><rect x="1668" y="271" width="7" height="2" fill="#a86b38"/><rect x="1676" y="271" width="9" height="2" fill="#80858a"/><rect x="1686" y="271" width="1" height="2" fill="#80858a"/><rect x="1688" y="271" width="5" height="2" fill="#a86b38"/><rect x="1668" y="274" width="5" height="2" fill="#a86b38"/><rect x="1674" y="274" width="11" height="2" fill="#80858a"/><rect x="1686" y="274" width="1" height="2" fill="#80858a"/><rect x="1672" y="277" width="9" height="2" fill="#80858a"/><rect x="1682" y="277" width="1" height="2" fill="#80858a"/><rect x="1684" y="277" width="6" height="2" fill="#a86b38"/><rect x="1672" y="280" width="18" height="2" fill="#80858a"/><rect x="1691" y="280" width="1" height="2" fill="#80858a"/><rect x="1693" y="280" width="68" height="2" fill="#80858a"/><rect x="1761" y="280" width="6" height="2" fill="#a86b38"/><rect x="1768" y="280" width="5" height="2" fill="#a86b38"/><rect x="1774" y="280" width="5" height="2" fill="#a86b38"/><rect x="1779" y="280" width="1" height="2" fill="#80858a"/><rect x="1780" y="280" width="1" height="2" fill="#a86b38"/><rect x="1672" y="283" width="3" height="2" fill="#a86b38"/><rect x="1676" y="283" width="7" height="2" fill="#80858a"/><rect x="1684" y="283" width="6" height="2" fill="#80858a"/><rect x="1691" y="283" width="1" height="2" fill="#80858a"/><rect x="1693" y="283" width="19" height="2" fill="#80858a"/><rect x="1713" y="283" width="1" height="2" fill="#80858a"/><rect x="1676" y="286" width="2" height="2" fill="#a86b38"/><rect x="1679" y="286" width="34" height="2" fill="#80858a"/><rect x="1714" y="286" width="1" height="2" fill="#80858a"/><rect x="1680" y="289" width="56" height="2" fill="#80858a"/><rect x="1736" y="289" width="1" height="2" fill="#a86b38"/><rect x="1738" y="289" width="36" height="2" fill="#80858a"/><rect x="1774" y="289" width="5" height="2" fill="#a86b38"/><rect x="1779" y="289" width="2" height="2" fill="#80858a"/><rect x="1781" y="289" width="1" height="2" fill="#a86b38"/><rect x="1680" y="292" width="26" height="2" fill="#80858a"/><rect x="1706" y="292" width="1" height="2" fill="#a86b38"/><rect x="1680" y="295" width="9" height="2" fill="#80858a"/><rect x="1690" y="295" width="1" height="2" fill="#80858a"/><rect x="1692" y="295" width="5" height="2" fill="#a86b38"/><rect x="1676" y="298" width="1" height="2" fill="#80858a"/><rect x="1672" y="301" width="1" height="2" fill="#80858a"/><rect x="1672" y="304" width="44" height="2" fill="#80858a"/><rect x="1716" y="304" width="1" height="2" fill="#a86b38"/><rect x="1718" y="304" width="12" height="2" fill="#80858a"/><rect x="1730" y="304" width="1" height="2" fill="#a86b38"/><rect x="1672" y="307" width="52" height="2" fill="#80858a"/><rect x="1724" y="307" width="1" height="2" fill="#a86b38"/><rect x="1672" y="310" width="68" height="2" fill="#80858a"/><rect x="1740" y="310" width="1" height="2" fill="#a86b38"/><rect x="1742" y="310" width="9" height="2" fill="#80858a"/><rect x="1751" y="310" width="1" height="2" fill="#a86b38"/><rect x="1672" y="313" width="33" height="2" fill="#80858a"/><rect x="1705" y="313" width="1" height="2" fill="#a86b38"/><rect x="1668" y="316" width="1" height="2" fill="#80858a"/><rect x="1668" y="322" width="2" height="2" fill="#5b5d5f"/><rect x="1671" y="322" width="4" height="2" fill="#5b5d5f"/><rect x="1676" y="322" width="6" height="2" fill="#5b5d5f"/><rect x="1683" y="322" width="3" height="2" fill="#5b5d5f"/><rect x="1687" y="322" width="22" height="2" fill="#5b5d5f"/><rect x="1710" y="322" width="8" height="2" fill="#5b5d5f"/><rect x="1719" y="322" width="2" height="2" fill="#5b5d5f"/><rect x="1722" y="322" width="3" height="2" fill="#5b5d5f"/><rect x="1726" y="322" width="10" height="2" fill="#5b5d5f"/><rect x="1737" y="322" width="7" height="2" fill="#5b5d5f"/><rect x="1745" y="322" width="2" height="2" fill="#5b5d5f"/><rect x="1748" y="322" width="4" height="2" fill="#5b5d5f"/><rect x="1668" y="325" width="50" height="2" fill="#80858a"/><rect x="1718" y="325" width="1" height="2" fill="#a86b38"/><rect x="1720" y="325" width="12" height="2" fill="#80858a"/><rect x="1732" y="325" width="1" height="2" fill="#a86b38"/><rect x="1668" y="328" width="53" height="2" fill="#80858a"/><rect x="1721" y="328" width="1" height="2" fill="#a86b38"/><rect x="1723" y="328" width="12" height="2" fill="#80858a"/><rect x="1735" y="328" width="1" height="2" fill="#a86b38"/><rect x="1664" y="331" width="1" height="2" fill="#80858a"/><rect x="1664" y="337" width="4" height="2" fill="#a86b38"/><rect x="1669" y="337" width="1" height="2" fill="#80858a"/><rect x="1668" y="340" width="2" height="2" fill="#5b5d5f"/><rect x="1671" y="340" width="6" height="2" fill="#5b5d5f"/><rect x="1678" y="340" width="7" height="2" fill="#5b5d5f"/><rect x="1686" y="340" width="10" height="2" fill="#5b5d5f"/><rect x="1697" y="340" width="10" height="2" fill="#5b5d5f"/><rect x="1708" y="340" width="4" height="2" fill="#5b5d5f"/><rect x="1713" y="340" width="3" height="2" fill="#5b5d5f"/><rect x="1717" y="340" width="7" height="2" fill="#5b5d5f"/><rect x="1725" y="340" width="9" height="2" fill="#5b5d5f"/><rect x="1668" y="343" width="57" height="2" fill="#80858a"/><rect x="1725" y="343" width="1" height="2" fill="#a86b38"/><rect x="1727" y="343" width="12" height="2" fill="#80858a"/><rect x="1739" y="343" width="1" height="2" fill="#a86b38"/><rect x="1664" y="346" width="1" height="2" fill="#80858a"/><rect x="1664" y="352" width="2" height="2" fill="#5b5d5f"/><rect x="1667" y="352" width="2" height="2" fill="#5b5d5f"/><rect x="1670" y="352" width="3" height="2" fill="#5b5d5f"/><rect x="1674" y="352" width="10" height="2" fill="#5b5d5f"/><rect x="1685" y="352" width="12" height="2" fill="#5b5d5f"/><rect x="1698" y="352" width="5" height="2" fill="#5b5d5f"/><rect x="1704" y="352" width="2" height="2" fill="#5b5d5f"/><rect x="1707" y="352" width="4" height="2" fill="#5b5d5f"/><rect x="1712" y="352" width="2" height="2" fill="#5b5d5f"/><rect x="1715" y="352" width="5" height="2" fill="#5b5d5f"/><rect x="1721" y="352" width="3" height="2" fill="#5b5d5f"/><rect x="1725" y="352" width="7" height="2" fill="#5b5d5f"/><rect x="1733" y="352" width="5" height="2" fill="#5b5d5f"/><rect x="1664" y="355" width="2" height="2" fill="#5b5d5f"/><rect x="1667" y="355" width="13" height="2" fill="#5b5d5f"/><rect x="1681" y="355" width="2" height="2" fill="#5b5d5f"/><rect x="1684" y="355" width="3" height="2" fill="#5b5d5f"/><rect x="1688" y="355" width="3" height="2" fill="#5b5d5f"/><rect x="1692" y="355" width="4" height="2" fill="#5b5d5f"/><rect x="1697" y="355" width="7" height="2" fill="#5b5d5f"/><rect x="1705" y="355" width="15" height="2" fill="#5b5d5f"/><rect x="1721" y="355" width="5" height="2" fill="#5b5d5f"/><rect x="1727" y="355" width="2" height="2" fill="#5b5d5f"/><rect x="1730" y="355" width="5" height="2" fill="#5b5d5f"/><rect x="1664" y="358" width="8" height="2" fill="#80858a"/><rect x="1673" y="358" width="18" height="2" fill="#80858a"/><rect x="1692" y="358" width="1" height="2" fill="#80858a"/><rect x="1672" y="361" width="57" height="2" fill="#80858a"/><rect x="1729" y="361" width="6" height="2" fill="#a86b38"/><rect x="1736" y="361" width="5" height="2" fill="#a86b38"/><rect x="1742" y="361" width="5" height="2" fill="#a86b38"/><rect x="1747" y="361" width="1" height="2" fill="#80858a"/><rect x="1748" y="361" width="1" height="2" fill="#a86b38"/><rect x="1664" y="367" width="2" height="2" fill="#5b5d5f"/><rect x="1667" y="367" width="8" height="2" fill="#5b5d5f"/><rect x="1676" y="367" width="7" height="2" fill="#5b5d5f"/><rect x="1684" y="367" width="25" height="2" fill="#5b5d5f"/><rect x="1710" y="367" width="4" height="2" fill="#5b5d5f"/><rect x="1715" y="367" width="9" height="2" fill="#5b5d5f"/><rect x="1725" y="367" width="16" height="2" fill="#5b5d5f"/><rect x="1664" y="370" width="2" height="2" fill="#5b5d5f"/><rect x="1667" y="370" width="8" height="2" fill="#5b5d5f"/><rect x="1676" y="370" width="3" height="2" fill="#5b5d5f"/><rect x="1680" y="370" width="3" height="2" fill="#5b5d5f"/><rect x="1684" y="370" width="5" height="2" fill="#5b5d5f"/><rect x="1664" y="373" width="30" height="2" fill="#80858a"/><rect x="1695" y="373" width="29" height="2" fill="#80858a"/><rect x="1725" y="373" width="1" height="2" fill="#80858a"/><rect x="1727" y="373" width="3" height="2" fill="#a86b38"/><rect x="1731" y="373" width="13" height="2" fill="#80858a"/><rect x="1744" y="373" width="1" height="2" fill="#a86b38"/><rect x="1664" y="376" width="12" height="2" fill="#80858a"/><rect x="1677" y="376" width="25" height="2" fill="#80858a"/><rect x="1703" y="376" width="1" height="2" fill="#80858a"/><rect x="1705" y="376" width="3" height="2" fill="#a86b38"/><rect x="1709" y="376" width="13" height="2" fill="#80858a"/><rect x="1722" y="376" width="1" height="2" fill="#a86b38"/><rect x="1664" y="379" width="12" height="2" fill="#80858a"/><rect x="1677" y="379" width="28" height="2" fill="#80858a"/><rect x="1706" y="379" width="1" height="2" fill="#80858a"/><rect x="1708" y="379" width="3" height="2" fill="#a86b38"/><rect x="1712" y="379" width="13" height="2" fill="#80858a"/><rect x="1725" y="379" width="1" height="2" fill="#a86b38"/><rect x="1664" y="382" width="3" height="2" fill="#a86b38"/><rect x="1668" y="382" width="7" height="2" fill="#80858a"/><rect x="1676" y="382" width="6" height="2" fill="#80858a"/><rect x="1683" y="382" width="1" height="2" fill="#80858a"/><rect x="1685" y="382" width="19" height="2" fill="#80858a"/><rect x="1705" y="382" width="1" height="2" fill="#80858a"/><rect x="1668" y="385" width="2" height="2" fill="#a86b38"/><rect x="1671" y="385" width="33" height="2" fill="#80858a"/><rect x="1705" y="385" width="1" height="2" fill="#80858a"/><rect x="1672" y="388" width="2" height="2" fill="#5b5d5f"/><rect x="1675" y="388" width="4" height="2" fill="#5b5d5f"/><rect x="1680" y="388" width="1" height="2" fill="#5b5d5f"/><rect x="1682" y="388" width="7" height="2" fill="#5b5d5f"/><rect x="1690" y="388" width="9" height="2" fill="#5b5d5f"/><rect x="1700" y="388" width="2" height="2" fill="#5b5d5f"/><rect x="1703" y="388" width="5" height="2" fill="#5b5d5f"/><rect x="1709" y="388" width="5" height="2" fill="#5b5d5f"/><rect x="1715" y="388" width="5" height="2" fill="#5b5d5f"/><rect x="1668" y="391" width="1" height="2" fill="#80858a"/><rect x="1668" y="394" width="4" height="2" fill="#a86b38"/><rect x="1673" y="394" width="2" height="2" fill="#a86b38"/><rect x="1676" y="394" width="31" height="2" fill="#80858a"/><rect x="1707" y="394" width="1" height="2" fill="#a86b38"/><rect x="1709" y="394" width="16" height="2" fill="#80858a"/><rect x="1725" y="394" width="5" height="2" fill="#a86b38"/><rect x="1730" y="394" width="2" height="2" fill="#80858a"/><rect x="1733" y="394" width="1" height="2" fill="#80858a"/><rect x="1672" y="397" width="60" height="2" fill="#80858a"/><rect x="1732" y="397" width="1" height="2" fill="#a86b38"/><rect x="1734" y="397" width="25" height="2" fill="#80858a"/><rect x="1759" y="397" width="5" height="2" fill="#a86b38"/><rect x="1764" y="397" width="2" height="2" fill="#80858a"/><rect x="1766" y="397" width="1" height="2" fill="#a86b38"/><rect x="1668" y="400" width="1" height="2" fill="#80858a"/><rect x="1668" y="403" width="4" height="2" fill="#a86b38"/><rect x="1673" y="403" width="2" height="2" fill="#a86b38"/><rect x="1676" y="403" width="31" height="2" fill="#80858a"/><rect x="1707" y="403" width="1" height="2" fill="#a86b38"/><rect x="1709" y="403" width="8" height="2" fill="#80858a"/><rect x="1717" y="403" width="5" height="2" fill="#a86b38"/><rect x="1722" y="403" width="2" height="2" fill="#80858a"/><rect x="1725" y="403" width="1" height="2" fill="#80858a"/><rect x="1672" y="406" width="37" height="2" fill="#80858a"/><rect x="1709" y="406" width="1" height="2" fill="#a86b38"/><rect x="1668" y="409" width="1" height="2" fill="#80858a"/><rect x="1668" y="412" width="4" height="2" fill="#a86b38"/><rect x="1673" y="412" width="1" height="2" fill="#80858a"/><rect x="1672" y="415" width="40" height="2" fill="#80858a"/><rect x="1712" y="415" width="1" height="2" fill="#a86b38"/><rect x="1668" y="418" width="1" height="2" fill="#80858a"/><rect x="1664" y="421" width="1" height="2" fill="#80858a"/><rect x="1664" y="427" width="2" height="2" fill="#5b5d5f"/><rect x="1667" y="427" width="6" height="2" fill="#5b5d5f"/><rect x="1674" y="427" width="6" height="2" fill="#5b5d5f"/><rect x="1681" y="427" width="3" height="2" fill="#5b5d5f"/><rect x="1685" y="427" width="25" height="2" fill="#5b5d5f"/><rect x="1711" y="427" width="4" height="2" fill="#5b5d5f"/><rect x="1716" y="427" width="9" height="2" fill="#5b5d5f"/><rect x="1726" y="427" width="16" height="2" fill="#5b5d5f"/><rect x="1664" y="430" width="48" height="2" fill="#80858a"/><rect x="1712" y="430" width="1" height="2" fill="#a86b38"/><rect x="1714" y="430" width="12" height="2" fill="#80858a"/><rect x="1726" y="430" width="1" height="2" fill="#a86b38"/><rect x="1664" y="433" width="61" height="2" fill="#80858a"/><rect x="1725" y="433" width="1" height="2" fill="#a86b38"/><rect x="1727" y="433" width="12" height="2" fill="#80858a"/><rect x="1739" y="433" width="1" height="2" fill="#a86b38"/><rect x="1664" y="439" width="2" height="2" fill="#5b5d5f"/><rect x="1667" y="439" width="5" height="2" fill="#5b5d5f"/><rect x="1673" y="439" width="6" height="2" fill="#5b5d5f"/><rect x="1680" y="439" width="3" height="2" fill="#5b5d5f"/><rect x="1684" y="439" width="25" height="2" fill="#5b5d5f"/><rect x="1710" y="439" width="4" height="2" fill="#5b5d5f"/><rect x="1715" y="439" width="9" height="2" fill="#5b5d5f"/><rect x="1725" y="439" width="8" height="2" fill="#5b5d5f"/><rect x="1664" y="442" width="30" height="2" fill="#80858a"/><rect x="1695" y="442" width="21" height="2" fill="#80858a"/><rect x="1717" y="442" width="1" height="2" fill="#80858a"/><rect x="1719" y="442" width="3" height="2" fill="#a86b38"/><rect x="1723" y="442" width="13" height="2" fill="#80858a"/><rect x="1736" y="442" width="1" height="2" fill="#a86b38"/><rect x="1664" y="445" width="3" height="2" fill="#a86b38"/><rect x="1668" y="445" width="7" height="2" fill="#80858a"/><rect x="1676" y="445" width="17" height="2" fill="#80858a"/><rect x="1694" y="445" width="1" height="2" fill="#80858a"/><rect x="1696" y="445" width="26" height="2" fill="#80858a"/><rect x="1723" y="445" width="1" height="2" fill="#80858a"/><rect x="1668" y="448" width="63" height="2" fill="#80858a"/><rect x="1731" y="448" width="1" height="2" fill="#a86b38"/><rect x="1733" y="448" width="25" height="2" fill="#80858a"/><rect x="1758" y="448" width="5" height="2" fill="#a86b38"/><rect x="1763" y="448" width="2" height="2" fill="#80858a"/><rect x="1765" y="448" width="1" height="2" fill="#a86b38"/><rect x="1664" y="451" width="1" height="2" fill="#80858a"/><rect x="1664" y="454" width="40" height="2" fill="#80858a"/><rect x="1704" y="454" width="1" height="2" fill="#a86b38"/><rect x="1706" y="454" width="12" height="2" fill="#80858a"/><rect x="1718" y="454" width="1" height="2" fill="#a86b38"/><rect x="1664" y="457" width="53" height="2" fill="#80858a"/><rect x="1717" y="457" width="1" height="2" fill="#a86b38"/><rect x="1719" y="457" width="12" height="2" fill="#80858a"/><rect x="1731" y="457" width="1" height="2" fill="#a86b38"/><rect x="1664" y="463" width="2" height="2" fill="#5b5d5f"/><rect x="1667" y="463" width="8" height="2" fill="#5b5d5f"/><rect x="1676" y="463" width="6" height="2" fill="#5b5d5f"/><rect x="1683" y="463" width="3" height="2" fill="#5b5d5f"/><rect x="1687" y="463" width="5" height="2" fill="#5b5d5f"/><rect x="1693" y="463" width="26" height="2" fill="#5b5d5f"/><rect x="1664" y="466" width="30" height="2" fill="#80858a"/><rect x="1695" y="466" width="24" height="2" fill="#80858a"/><rect x="1720" y="466" width="1" height="2" fill="#80858a"/><rect x="1722" y="466" width="3" height="2" fill="#a86b38"/><rect x="1726" y="466" width="13" height="2" fill="#80858a"/><rect x="1739" y="466" width="1" height="2" fill="#a86b38"/><rect x="1664" y="469" width="3" height="2" fill="#a86b38"/><rect x="1668" y="469" width="7" height="2" fill="#80858a"/><rect x="1676" y="469" width="17" height="2" fill="#80858a"/><rect x="1694" y="469" width="1" height="2" fill="#80858a"/><rect x="1696" y="469" width="29" height="2" fill="#80858a"/><rect x="1726" y="469" width="1" height="2" fill="#80858a"/><rect x="1668" y="472" width="66" height="2" fill="#80858a"/><rect x="1734" y="472" width="1" height="2" fill="#a86b38"/><rect x="1736" y="472" width="25" height="2" fill="#80858a"/><rect x="1761" y="472" width="5" height="2" fill="#a86b38"/><rect x="1766" y="472" width="2" height="2" fill="#80858a"/><rect x="1768" y="472" width="1" height="2" fill="#a86b38"/><rect x="1664" y="475" width="1" height="2" fill="#80858a"/><rect x="1664" y="478" width="56" height="2" fill="#80858a"/><rect x="1720" y="478" width="1" height="2" fill="#a86b38"/><rect x="1722" y="478" width="12" height="2" fill="#80858a"/><rect x="1734" y="478" width="1" height="2" fill="#a86b38"/><rect x="1664" y="484" width="2" height="2" fill="#5b5d5f"/><rect x="1667" y="484" width="5" height="2" fill="#5b5d5f"/><rect x="1673" y="484" width="6" height="2" fill="#5b5d5f"/><rect x="1680" y="484" width="6" height="2" fill="#5b5d5f"/><rect x="1687" y="484" width="4" height="2" fill="#5b5d5f"/><rect x="1692" y="484" width="11" height="2" fill="#5b5d5f"/><rect x="1704" y="484" width="5" height="2" fill="#5b5d5f"/><rect x="1710" y="484" width="3" height="2" fill="#5b5d5f"/><rect x="1714" y="484" width="15" height="2" fill="#5b5d5f"/><rect x="1730" y="484" width="5" height="2" fill="#5b5d5f"/><rect x="1736" y="484" width="4" height="2" fill="#5b5d5f"/><rect x="1664" y="487" width="2" height="2" fill="#5b5d5f"/><rect x="1667" y="487" width="8" height="2" fill="#5b5d5f"/><rect x="1676" y="487" width="3" height="2" fill="#5b5d5f"/><rect x="1680" y="487" width="8" height="2" fill="#5b5d5f"/><rect x="1689" y="487" width="9" height="2" fill="#5b5d5f"/><rect x="1699" y="487" width="4" height="2" fill="#5b5d5f"/><rect x="1704" y="487" width="9" height="2" fill="#5b5d5f"/><rect x="1714" y="487" width="12" height="2" fill="#5b5d5f"/><rect x="1727" y="487" width="2" height="2" fill="#5b5d5f"/><rect x="1730" y="487" width="9" height="2" fill="#5b5d5f"/><rect x="1664" y="490" width="32" height="2" fill="#80858a"/><rect x="1696" y="490" width="1" height="2" fill="#a86b38"/><rect x="1660" y="493" width="1" height="2" fill="#80858a"/><rect x="1660" y="499" width="6" height="2" fill="#a86b38"/><rect x="1667" y="499" width="6" height="2" fill="#a86b38"/><rect x="1674" y="499" width="4" height="2" fill="#a86b38"/><rect x="1679" y="499" width="27" height="2" fill="#80858a"/><rect x="1668" y="502" width="31" height="2" fill="#80858a"/><rect x="1700" y="502" width="11" height="2" fill="#80858a"/><rect x="1711" y="502" width="1" height="2" fill="#a86b38"/><rect x="1713" y="502" width="26" height="2" fill="#80858a"/><rect x="1740" y="502" width="19" height="2" fill="#80858a"/><rect x="1760" y="502" width="1" height="2" fill="#80858a"/><rect x="1664" y="508" width="8" height="2" fill="#80858a"/><rect x="1673" y="508" width="18" height="2" fill="#80858a"/><rect x="1692" y="508" width="1" height="2" fill="#80858a"/><rect x="1694" y="508" width="50" height="2" fill="#80858a"/><rect x="1744" y="508" width="6" height="2" fill="#a86b38"/><rect x="1751" y="508" width="5" height="2" fill="#a86b38"/><rect x="1757" y="508" width="5" height="2" fill="#a86b38"/><rect x="1762" y="508" width="1" height="2" fill="#80858a"/><rect x="1763" y="508" width="1" height="2" fill="#a86b38"/><rect x="1664" y="514" width="2" height="2" fill="#5b5d5f"/><rect x="1667" y="514" width="8" height="2" fill="#5b5d5f"/><rect x="1676" y="514" width="24" height="2" fill="#5b5d5f"/><rect x="1701" y="514" width="4" height="2" fill="#5b5d5f"/><rect x="1706" y="514" width="4" height="2" fill="#5b5d5f"/><rect x="1711" y="514" width="2" height="2" fill="#5b5d5f"/><rect x="1714" y="514" width="4" height="2" fill="#5b5d5f"/><rect x="1719" y="514" width="7" height="2" fill="#5b5d5f"/><rect x="1727" y="514" width="4" height="2" fill="#5b5d5f"/><rect x="1664" y="517" width="2" height="2" fill="#5b5d5f"/><rect x="1667" y="517" width="1" height="2" fill="#5b5d5f"/><rect x="1669" y="517" width="4" height="2" fill="#5b5d5f"/><rect x="1674" y="517" width="2" height="2" fill="#5b5d5f"/><rect x="1677" y="517" width="7" height="2" fill="#5b5d5f"/><rect x="1685" y="517" width="6" height="2" fill="#5b5d5f"/><rect x="1692" y="517" width="17" height="2" fill="#5b5d5f"/><rect x="1710" y="517" width="14" height="2" fill="#5b5d5f"/><rect x="1725" y="517" width="4" height="2" fill="#5b5d5f"/><rect x="1730" y="517" width="4" height="2" fill="#5b5d5f"/><rect x="1664" y="520" width="2" height="2" fill="#5b5d5f"/><rect x="1667" y="520" width="1" height="2" fill="#5b5d5f"/><rect x="1669" y="520" width="4" height="2" fill="#5b5d5f"/><rect x="1674" y="520" width="2" height="2" fill="#5b5d5f"/><rect x="1677" y="520" width="3" height="2" fill="#5b5d5f"/><rect x="1681" y="520" width="8" height="2" fill="#5b5d5f"/><rect x="1690" y="520" width="3" height="2" fill="#5b5d5f"/><rect x="1694" y="520" width="7" height="2" fill="#5b5d5f"/><rect x="1702" y="520" width="9" height="2" fill="#5b5d5f"/><rect x="1712" y="520" width="2" height="2" fill="#5b5d5f"/><rect x="1715" y="520" width="3" height="2" fill="#5b5d5f"/><rect x="1719" y="520" width="19" height="2" fill="#5b5d5f"/><rect x="1664" y="523" width="3" height="2" fill="#a86b38"/><rect x="1668" y="523" width="24" height="2" fill="#80858a"/><rect x="1693" y="523" width="1" height="2" fill="#80858a"/><rect x="1695" y="523" width="39" height="2" fill="#80858a"/><rect x="1735" y="523" width="1" height="2" fill="#80858a"/><rect x="1737" y="523" width="1" height="2" fill="#80858a"/><rect x="1739" y="523" width="1" height="2" fill="#80858a"/><rect x="1741" y="523" width="25" height="2" fill="#80858a"/><rect x="1766" y="523" width="1" height="2" fill="#a86b38"/><rect x="1664" y="526" width="33" height="2" fill="#80858a"/><rect x="1697" y="526" width="3" height="2" fill="#a86b38"/><rect x="1701" y="526" width="36" height="2" fill="#80858a"/><rect x="1737" y="526" width="1" height="2" fill="#a86b38"/><rect x="1739" y="526" width="26" height="2" fill="#80858a"/><rect x="1765" y="526" width="1" height="2" fill="#a86b38"/><rect x="1664" y="532" width="2" height="2" fill="#5b5d5f"/><rect x="1667" y="532" width="8" height="2" fill="#5b5d5f"/><rect x="1676" y="532" width="7" height="2" fill="#5b5d5f"/><rect x="1684" y="532" width="18" height="2" fill="#5b5d5f"/><rect x="1703" y="532" width="4" height="2" fill="#5b5d5f"/><rect x="1708" y="532" width="9" height="2" fill="#5b5d5f"/><rect x="1718" y="532" width="16" height="2" fill="#5b5d5f"/><rect x="1664" y="535" width="2" height="2" fill="#5b5d5f"/><rect x="1667" y="535" width="8" height="2" fill="#5b5d5f"/><rect x="1676" y="535" width="3" height="2" fill="#5b5d5f"/><rect x="1680" y="535" width="3" height="2" fill="#5b5d5f"/><rect x="1684" y="535" width="5" height="2" fill="#5b5d5f"/><rect x="1664" y="538" width="23" height="2" fill="#80858a"/><rect x="1688" y="538" width="29" height="2" fill="#80858a"/><rect x="1718" y="538" width="1" height="2" fill="#80858a"/><rect x="1720" y="538" width="3" height="2" fill="#a86b38"/><rect x="1724" y="538" width="13" height="2" fill="#80858a"/><rect x="1737" y="538" width="1" height="2" fill="#a86b38"/><rect x="1664" y="541" width="23" height="2" fill="#80858a"/><rect x="1688" y="541" width="22" height="2" fill="#80858a"/><rect x="1711" y="541" width="1" height="2" fill="#80858a"/><rect x="1713" y="541" width="3" height="2" fill="#a86b38"/><rect x="1717" y="541" width="13" height="2" fill="#80858a"/><rect x="1730" y="541" width="1" height="2" fill="#a86b38"/><rect x="1664" y="544" width="12" height="2" fill="#80858a"/><rect x="1677" y="544" width="25" height="2" fill="#80858a"/><rect x="1703" y="544" width="1" height="2" fill="#80858a"/><rect x="1705" y="544" width="3" height="2" fill="#a86b38"/><rect x="1709" y="544" width="13" height="2" fill="#80858a"/><rect x="1722" y="544" width="1" height="2" fill="#a86b38"/><rect x="1664" y="547" width="12" height="2" fill="#80858a"/><rect x="1677" y="547" width="28" height="2" fill="#80858a"/><rect x="1706" y="547" width="1" height="2" fill="#80858a"/><rect x="1708" y="547" width="3" height="2" fill="#a86b38"/><rect x="1712" y="547" width="13" height="2" fill="#80858a"/><rect x="1725" y="547" width="1" height="2" fill="#a86b38"/><rect x="1664" y="550" width="3" height="2" fill="#a86b38"/><rect x="1668" y="550" width="7" height="2" fill="#80858a"/><rect x="1676" y="550" width="6" height="2" fill="#80858a"/><rect x="1683" y="550" width="1" height="2" fill="#80858a"/><rect x="1685" y="550" width="19" height="2" fill="#80858a"/><rect x="1705" y="550" width="1" height="2" fill="#80858a"/></svg>
<div class="a" style="left:1811px;top:52px;width:1px;height:498px;background:#8c8c8c;"></div>
<div class="a" style="left:1631px;top:80px;width:22px;height:20px;background:#3a3a3a;border-radius:2px"></div>
<svg class="a" style="left:1635px;top:84px" width="14" height="14"><path d="M2,7 L5.5,10.5 L12,3.5" fill="none" stroke="#59a869" stroke-width="2.2"/></svg>
<div class="a" style="left:1641px;top:137px;width:14px;height:2px;background:#a0522d;"></div>
<div class="a" style="left:1641px;top:146px;width:14px;height:2px;background:#a0522d;"></div>
<div class="a" style="left:1641px;top:184px;width:14px;height:2px;background:#a0522d;"></div>
<div class="a" style="left:1643px;top:138px;width:8px;height:34px;border-radius:4px;background:#5a5c5e"></div>
<div class="a" style="left:85px;top:536px;width:1570px;height:14px;background:#45494c;"></div>
<div class="a" style="left:85px;top:536px;width:1570px;height:1px;background:#4b4b4b;"></div>
<div class="a" style="left:88px;top:538px;width:231px;height:10px;border-radius:5px;background:#606163;border:1px solid #3f4143"></div>
<div class="a" style="left:159px;top:177px;width:922px;height:257px;border:3px solid #fe0420;border-radius:5px"></div>
<div class="a" style="left:0px;top:550px;width:1812px;height:382px;background:#43474a;"></div>
<div class="a" style="left:0px;top:550px;width:3px;height:382px;background:#45494c;"></div>
<div class="a" style="left:4px;top:550px;width:1808px;height:1px;background:#2f3133;"></div>
<div class="a" style="left:3px;top:550px;width:1px;height:382px;background:#2e3032;"></div>
<div class="t" style="left:10px;top:557px;color:#c5c7c9;font-size:13px;font-weight:400;">Services</div>
<svg class="a" style="left:1743px;top:556px" width="18" height="18" viewBox="0 0 18 18"><circle cx="9" cy="8" r="6.3" fill="none" stroke="#c8cacc" stroke-width="1.4"/><path d="M9,1.5 V5 M9,11 V14.5 M2.5,8 H6 M12,8 H15.5" stroke="#c8cacc" stroke-width="1.4"/></svg>
<div class="a" style="left:1768px;top:555px;width:1px;height:18px;background:#555758;"></div>
<svg class="a" style="left:1776px;top:555px" width="18" height="18" viewBox="0 0 18 18"><path d="M9,1.5 L10.6,3.6 L13.2,2.9 L13.6,5.5 L16,6.6 L14.8,9 L16,11.4 L13.6,12.5 L13.2,15.1 L10.6,14.4 L9,16.5 L7.4,14.4 L4.8,15.1 L4.4,12.5 L2,11.4 L3.2,9 L2,6.6 L4.4,5.5 L4.8,2.9 L7.4,3.6Z" fill="#c8cacc"/><circle cx="9" cy="9" r="2.6" fill="#3c3f41"/></svg>
<div class="a" style="left:1802px;top:563px;width:10px;height:2px;background:#c8cacc;"></div>
<div class="a" style="left:4px;top:577px;width:1808px;height:1px;background:#2f3133;"></div>
<div class="a" style="left:32px;top:578px;width:1px;height:354px;background:#2f3133;"></div>
<svg class="a" style="left:9px;top:584px" width="18" height="18" viewBox="0 0 18 18"><path d="M8.5,15 A4.7,4.7 0 0 1 8,5.6 H11.5" fill="none" stroke="#59a869" stroke-width="2"/><path d="M11,1.8 L16,5.8 L11,9.6Z" fill="#59a869"/><rect x="10.2" y="11" width="5.2" height="5.2" fill="#c8cacc"/></svg>
<svg class="a" style="left:9px;top:610px" width="18" height="18" viewBox="0 0 18 18"><ellipse cx="8" cy="10" rx="4" ry="5.5" fill="#59a869"/><path d="M2,6 H14 M1.5,10 H8 M2,14 H8 M4,2 L6,4.5 M12,2 L10,4.5" stroke="#59a869" stroke-width="1.6"/><rect x="11" y="11" width="6" height="6" fill="#c8cacc"/></svg>
<div class="a" style="left:13px;top:640px;width:10px;height:10px;background:#db5c5c;"></div>
<div class="a" style="left:8px;top:661px;width:21px;height:1px;background:#555758;"></div>
<svg class="a" style="left:9px;top:669px" width="18" height="18" viewBox="0 0 18 18"><rect x="3" y="2.5" width="2.5" height="12" fill="#59a869"/><path d="M7,2.5 L16,8.5 L7,14.5Z" fill="#59a869"/></svg>
<svg class="a" style="left:9px;top:694px" width="18" height="18" viewBox="0 0 18 18"><rect x="5" y="3" width="3" height="11" fill="#6e7072"/><rect x="10" y="3" width="3" height="11" fill="#6e7072"/></svg>
<div class="a" style="left:8px;top:720px;width:21px;height:1px;background:#555758;"></div>
<svg class="a" style="left:9px;top:727px" width="18" height="18" viewBox="0 0 18 18"><circle cx="11.5" cy="6" r="4" fill="#db5c5c"/><circle cx="7" cy="10.5" r="5" fill="#db5c5c" stroke="#3c3f41" stroke-width="1"/></svg>
<svg class="a" style="left:9px;top:754px" width="18" height="18" viewBox="0 0 18 18"><circle cx="9" cy="9" r="5" fill="#db5c5c"/><path d="M2.5,15.5 L15.5,2.5" stroke="#c8cacc" stroke-width="1.4"/></svg>
<div class="a" style="left:8px;top:779px;width:21px;height:1px;background:#555758;"></div>
<svg class="a" style="left:9px;top:787px" width="18" height="18" viewBox="0 0 18 18"><path d="M1.5,5 H5 L6.5,3 H11.5 L13,5 H16.5 V15 H1.5Z" fill="#c8cacc"/><circle cx="9" cy="10" r="2.8" fill="none" stroke="#3c3f41" stroke-width="1.4"/></svg>
<div class="a" style="left:8px;top:812px;width:21px;height:1px;background:#555758;"></div>
<svg class="a" style="left:9px;top:819px" width="18" height="18" viewBox="0 0 18 18"><rect x="3" y="4" width="8" height="5" fill="#c8cacc"/><rect x="12" y="4" width="3" height="5" fill="#c8cacc"/><rect x="3" y="10" width="12" height="4" fill="#c8cacc"/></svg>
<svg class="a" style="left:9px;top:846px" width="18" height="18" viewBox="0 0 18 18"><path d="M9,2 L10.3,3.8 L12.5,3.2 L12.8,5.4 L14.9,6.3 L13.9,8.4 L14.9,10.5 L12.8,11.4 L12.5,13.6 L10.3,13 L9,14.8 L7.7,13 L5.5,13.6 L5.2,11.4 L3.1,10.5 L4.1,8.4 L3.1,6.3 L5.2,5.4 L5.5,3.2 L7.7,3.8Z" fill="#c8cacc"/><circle cx="9" cy="8.4" r="2.2" fill="#3c3f41"/><path d="M13,14 H18 L15.5,17Z" fill="#e0e0e0"/></svg>
<div class="a" style="left:33px;top:605px;width:355px;height:1px;background:#2f3133;"></div>
<svg class="a" style="left:37px;top:583px" width="18" height="18" viewBox="0 0 18 18"><path d="M2,2.5 H14 M2,15.5 H14" stroke="#c8cacc" stroke-width="1.6"/><path d="M8,4.5 L11,7.5 H5Z M8,13.5 L11,10.5 H5Z" fill="#c8cacc"/><path d="M4,9 H12" stroke="#c8cacc" stroke-width="0"/></svg>
<svg class="a" style="left:63px;top:583px" width="18" height="18" viewBox="0 0 18 18"><path d="M2,9 H14" stroke="#c8cacc" stroke-width="1.6"/><path d="M8,7 L11,4 H5Z M8,11 L11,14 H5Z" fill="#c8cacc"/></svg>
<div class="a" style="left:88px;top:583px;width:1px;height:19px;background:#555758;"></div>
<svg class="a" style="left:96px;top:583px" width="18" height="18" viewBox="0 0 18 18"><rect x="2" y="2" width="4" height="4" fill="#c8cacc"/><rect x="8" y="2" width="4" height="4" fill="#c8cacc"/><rect x="2" y="8" width="4" height="4" fill="#c8cacc"/><rect x="8" y="8" width="4" height="4" fill="#c8cacc"/><path d="M11,13 H16 L13.5,16Z" fill="#e0e0e0"/></svg>
<svg class="a" style="left:122px;top:583px" width="18" height="18" viewBox="0 0 18 18"><path d="M1.5,2 H14.5 L9.5,8 V15 L6.5,13 V8Z" fill="#c8cacc"/><path d="M11,13 H16 L13.5,16Z" fill="#e0e0e0"/></svg>
<svg class="a" style="left:148px;top:583px" width="18" height="18" viewBox="0 0 18 18"><path d="M2,15 V4 A2,2 0 0 1 4,2 H13 A2,2 0 0 1 15,4 V15" fill="none" stroke="#c8cacc" stroke-width="1.3"/><path d="M8.5,5 V12 M5,8.5 H12" stroke="#c8cacc" stroke-width="1.5"/></svg>
<div class="a" style="left:173px;top:583px;width:1px;height:19px;background:#555758;"></div>
<svg class="a" style="left:181px;top:583px" width="18" height="18" viewBox="0 0 18 18"><path d="M8,3 V13 M3,8 H13" stroke="#c8cacc" stroke-width="1.8"/><path d="M11,13 H16 L13.5,16Z" fill="#e0e0e0"/></svg>
<div class="a" style="left:33px;top:647px;width:355px;height:20px;background:#0a2d46;"></div>
<svg class="a" style="left:39px;top:613px" width="10" height="8" viewBox="0 0 10 8"><path d="M1,1.5 L5,5.5 L9,1.5" fill="none" stroke="#c8cacc" stroke-width="1.2"/></svg>
<svg class="a" style="left:58px;top:609px" width="18" height="18" viewBox="0 0 18 18"><path d="M1.5,11.5 C1.5,7.5 4.5,5.5 8.5,5 C11.5,4.5 13.5,3.5 15,1.5 C16.5,4.5 16.5,8 15.5,10 L9,13 C7,15 3,15 1.5,11.5 Z" fill="#62a84a"/><path d="M4,15.5 L8,15" stroke="#62a84a" stroke-width="1"/><path d="M7,12 L9.25,8.1 L13.75,8.1 L16,12 L13.75,15.9 L9.25,15.9Z" fill="#b4c0ca" stroke="#43474a" stroke-width="1"/><path d="M10.2,10.8 A2,2 0 1 0 12.8,10.8" fill="none" stroke="#30343a" stroke-width="1.1"/><path d="M11.5,9.3 V12" stroke="#30343a" stroke-width="1.1"/></svg>
<div class="t" style="left:76px;top:610px;color:#c5c7c9;font-size:13.5px;font-weight:400;">Spring Boot</div>
<svg class="a" style="left:57px;top:633px" width="10" height="8" viewBox="0 0 10 8"><path d="M1,1.5 L5,5.5 L9,1.5" fill="none" stroke="#c8cacc" stroke-width="1.2"/></svg>
<svg class="a" style="left:77px;top:629px" width="16" height="16" viewBox="0 0 16 16"><path d="M2,1.5 L14,8 L2,14.5Z" fill="#59a869"/></svg>
<div class="t" style="left:94px;top:630px;color:#c5c7c9;font-size:13.5px;font-weight:400;">Running</div>
<svg class="a" style="left:93px;top:649px" width="17" height="17" viewBox="0 0 17 17"><path d="M1,6.5 H15 M1,10 H15 M1.5,13.5 H14.5" stroke="#59a869" stroke-width="1.7"/><path d="M4.5,1.5 L6.8,4.5 M11.5,1.5 L9.2,4.5" stroke="#59a869" stroke-width="1.5"/><ellipse cx="8" cy="10" rx="4.2" ry="5.6" fill="#59a869"/><path d="M3.5,6.5 H12.5 M3.5,10 H12.5 M3.5,13.5 H12.5" stroke="#0a2d46" stroke-width="0"/><path d="M5.2,8.2 H10.8 M5.2,11.8 H10.8" stroke="#0a2d46" stroke-width="1.2"/></svg>
<div class="t" style="left:112px;top:650px;color:#c5c7c9;font-size:13.5px;font-weight:700;">GateWayApplication</div>
<svg class="a" style="left:57px;top:673px" width="10" height="8" viewBox="0 0 10 8"><path d="M1,1.5 L5,5.5 L9,1.5" fill="none" stroke="#c8cacc" stroke-width="1.2"/></svg>
<svg class="a" style="left:75px;top:669px" width="18" height="17" viewBox="0 0 18 17"><path d="M8.5,15 A4.7,4.7 0 0 1 8,5.6 H11.5" fill="none" stroke="#59a869" stroke-width="2"/><path d="M11,1.8 L16,5.8 L11,9.6Z" fill="#59a869"/><rect x="10.2" y="11" width="5.2" height="5.2" fill="#c8cacc"/></svg>
<div class="t" style="left:94px;top:670px;color:#c5c7c9;font-size:13.5px;font-weight:400;">Finished</div>
<svg class="a" style="left:93px;top:689px" width="18" height="18" viewBox="0 0 18 18"><path d="M1.5,11.5 C1.5,7.5 4.5,5.5 8.5,5 C11.5,4.5 13.5,3.5 15,1.5 C16.5,4.5 16.5,8 15.5,10 L9,13 C7,15 3,15 1.5,11.5 Z" fill="#62a84a"/><path d="M4,15.5 L8,15" stroke="#62a84a" stroke-width="1"/><path d="M7,12 L9.25,8.1 L13.75,8.1 L16,12 L13.75,15.9 L9.25,15.9Z" fill="#b4c0ca" stroke="#43474a" stroke-width="1"/><path d="M10.2,10.8 A2,2 0 1 0 12.8,10.8" fill="none" stroke="#30343a" stroke-width="1.1"/><path d="M11.5,9.3 V12" stroke="#30343a" stroke-width="1.1"/></svg>
<div class="t" style="left:112px;top:690px;color:#c5c7c9;font-size:13.5px;font-weight:700;">AuthApplication</div>
<svg class="a" style="left:93px;top:709px" width="18" height="18" viewBox="0 0 18 18"><path d="M1.5,11.5 C1.5,7.5 4.5,5.5 8.5,5 C11.5,4.5 13.5,3.5 15,1.5 C16.5,4.5 16.5,8 15.5,10 L9,13 C7,15 3,15 1.5,11.5 Z" fill="#62a84a"/><path d="M4,15.5 L8,15" stroke="#62a84a" stroke-width="1"/><path d="M7,12 L9.25,8.1 L13.75,8.1 L16,12 L13.75,15.9 L9.25,15.9Z" fill="#b4c0ca" stroke="#43474a" stroke-width="1"/><path d="M10.2,10.8 A2,2 0 1 0 12.8,10.8" fill="none" stroke="#30343a" stroke-width="1.1"/><path d="M11.5,9.3 V12" stroke="#30343a" stroke-width="1.1"/></svg>
<div class="t" style="left:112px;top:710px;color:#c5c7c9;font-size:13.5px;font-weight:700;">EquiptApplication</div>
<svg class="a" style="left:93px;top:729px" width="18" height="18" viewBox="0 0 18 18"><path d="M1.5,11.5 C1.5,7.5 4.5,5.5 8.5,5 C11.5,4.5 13.5,3.5 15,1.5 C16.5,4.5 16.5,8 15.5,10 L9,13 C7,15 3,15 1.5,11.5 Z" fill="#62a84a"/><path d="M4,15.5 L8,15" stroke="#62a84a" stroke-width="1"/><path d="M7,12 L9.25,8.1 L13.75,8.1 L16,12 L13.75,15.9 L9.25,15.9Z" fill="#b4c0ca" stroke="#43474a" stroke-width="1"/><path d="M10.2,10.8 A2,2 0 1 0 12.8,10.8" fill="none" stroke="#30343a" stroke-width="1.1"/><path d="M11.5,9.3 V12" stroke="#30343a" stroke-width="1.1"/></svg>
<div class="t" style="left:112px;top:730px;color:#c5c7c9;font-size:13.5px;font-weight:700;">LogApplication</div>
<svg class="a" style="left:93px;top:749px" width="18" height="18" viewBox="0 0 18 18"><path d="M1.5,11.5 C1.5,7.5 4.5,5.5 8.5,5 C11.5,4.5 13.5,3.5 15,1.5 C16.5,4.5 16.5,8 15.5,10 L9,13 C7,15 3,15 1.5,11.5 Z" fill="#62a84a"/><path d="M4,15.5 L8,15" stroke="#62a84a" stroke-width="1"/><path d="M7,12 L9.25,8.1 L13.75,8.1 L16,12 L13.75,15.9 L9.25,15.9Z" fill="#b4c0ca" stroke="#43474a" stroke-width="1"/><path d="M10.2,10.8 A2,2 0 1 0 12.8,10.8" fill="none" stroke="#30343a" stroke-width="1.1"/><path d="M11.5,9.3 V12" stroke="#30343a" stroke-width="1.1"/></svg>
<div class="t" style="left:112px;top:750px;color:#c5c7c9;font-size:13.5px;font-weight:700;">ResourceApplication</div>
<svg class="a" style="left:93px;top:769px" width="18" height="18" viewBox="0 0 18 18"><path d="M1.5,11.5 C1.5,7.5 4.5,5.5 8.5,5 C11.5,4.5 13.5,3.5 15,1.5 C16.5,4.5 16.5,8 15.5,10 L9,13 C7,15 3,15 1.5,11.5 Z" fill="#62a84a"/><path d="M4,15.5 L8,15" stroke="#62a84a" stroke-width="1"/><path d="M7,12 L9.25,8.1 L13.75,8.1 L16,12 L13.75,15.9 L9.25,15.9Z" fill="#b4c0ca" stroke="#43474a" stroke-width="1"/><path d="M10.2,10.8 A2,2 0 1 0 12.8,10.8" fill="none" stroke="#30343a" stroke-width="1.1"/><path d="M11.5,9.3 V12" stroke="#30343a" stroke-width="1.1"/></svg>
<div class="t" style="left:112px;top:770px;color:#c5c7c9;font-size:13.5px;font-weight:700;">SystemApplication</div>
<svg class="a" style="left:93px;top:789px" width="18" height="18" viewBox="0 0 18 18"><path d="M1.5,11.5 C1.5,7.5 4.5,5.5 8.5,5 C11.5,4.5 13.5,3.5 15,1.5 C16.5,4.5 16.5,8 15.5,10 L9,13 C7,15 3,15 1.5,11.5 Z" fill="#62a84a"/><path d="M4,15.5 L8,15" stroke="#62a84a" stroke-width="1"/><path d="M7,12 L9.25,8.1 L13.75,8.1 L16,12 L13.75,15.9 L9.25,15.9Z" fill="#b4c0ca" stroke="#43474a" stroke-width="1"/><path d="M10.2,10.8 A2,2 0 1 0 12.8,10.8" fill="none" stroke="#30343a" stroke-width="1.1"/><path d="M11.5,9.3 V12" stroke="#30343a" stroke-width="1.1"/></svg>
<div class="t" style="left:112px;top:790px;color:#c5c7c9;font-size:13.5px;font-weight:700;">UserApplication</div>
<svg class="a" style="left:57px;top:813px" width="10" height="8" viewBox="0 0 10 8"><path d="M1,1.5 L5,5.5 L9,1.5" fill="none" stroke="#c8cacc" stroke-width="1.2"/></svg>
<svg class="a" style="left:75px;top:809px" width="18" height="17" viewBox="0 0 18 17"><path d="M2.5,15 L9,8.5" stroke="#c8cacc" stroke-width="2.6" stroke-linecap="round"/><path d="M8,9 A4.5,4.5 0 0 1 13.5,2 L11,4.5 L13,6.5 L15.5,4 A4.5,4.5 0 0 1 8.5,9.5Z" fill="#c8cacc"/></svg>
<div class="t" style="left:94px;top:810px;color:#c5c7c9;font-size:13.5px;font-weight:400;">Not Started</div>
<svg class="a" style="left:93px;top:829px" width="18" height="18" viewBox="0 0 18 18"><path d="M1.5,11.5 C1.5,7.5 4.5,5.5 8.5,5 C11.5,4.5 13.5,3.5 15,1.5 C16.5,4.5 16.5,8 15.5,10 L9,13 C7,15 3,15 1.5,11.5 Z" fill="#62a84a"/><path d="M4,15.5 L8,15" stroke="#62a84a" stroke-width="1"/><path d="M7,12 L9.25,8.1 L13.75,8.1 L16,12 L13.75,15.9 L9.25,15.9Z" fill="#b4c0ca" stroke="#43474a" stroke-width="1"/><path d="M10.2,10.8 A2,2 0 1 0 12.8,10.8" fill="none" stroke="#30343a" stroke-width="1.1"/><path d="M11.5,9.3 V12" stroke="#30343a" stroke-width="1.1"/></svg>
<div class="t" style="left:112px;top:830px;color:#c5c7c9;font-size:13.5px;font-weight:400;">DemoApplication <span style="color:#808080">[devtools]</span></div>
<svg class="a" style="left:93px;top:849px" width="18" height="18" viewBox="0 0 18 18"><path d="M1.5,11.5 C1.5,7.5 4.5,5.5 8.5,5 C11.5,4.5 13.5,3.5 15,1.5 C16.5,4.5 16.5,8 15.5,10 L9,13 C7,15 3,15 1.5,11.5 Z" fill="#62a84a"/><path d="M4,15.5 L8,15" stroke="#62a84a" stroke-width="1"/><path d="M7,12 L9.25,8.1 L13.75,8.1 L16,12 L13.75,15.9 L9.25,15.9Z" fill="#b4c0ca" stroke="#43474a" stroke-width="1"/><path d="M10.2,10.8 A2,2 0 1 0 12.8,10.8" fill="none" stroke="#30343a" stroke-width="1.1"/><path d="M11.5,9.3 V12" stroke="#30343a" stroke-width="1.1"/></svg>
<div class="t" style="left:112px;top:850px;color:#c5c7c9;font-size:13.5px;font-weight:400;">RabbitApplication</div>
<svg class="a" style="left:93px;top:869px" width="18" height="18" viewBox="0 0 18 18"><path d="M1.5,11.5 C1.5,7.5 4.5,5.5 8.5,5 C11.5,4.5 13.5,3.5 15,1.5 C16.5,4.5 16.5,8 15.5,10 L9,13 C7,15 3,15 1.5,11.5 Z" fill="#62a84a"/><path d="M4,15.5 L8,15" stroke="#62a84a" stroke-width="1"/><path d="M7,12 L9.25,8.1 L13.75,8.1 L16,12 L13.75,15.9 L9.25,15.9Z" fill="#b4c0ca" stroke="#43474a" stroke-width="1"/><path d="M10.2,10.8 A2,2 0 1 0 12.8,10.8" fill="none" stroke="#30343a" stroke-width="1.1"/><path d="M11.5,9.3 V12" stroke="#30343a" stroke-width="1.1"/></svg>
<div class="t" style="left:112px;top:870px;color:#c5c7c9;font-size:13.5px;font-weight:400;">RabbitConsumerApplication</div>
<svg class="a" style="left:93px;top:889px" width="18" height="18" viewBox="0 0 18 18"><path d="M1.5,11.5 C1.5,7.5 4.5,5.5 8.5,5 C11.5,4.5 13.5,3.5 15,1.5 C16.5,4.5 16.5,8 15.5,10 L9,13 C7,15 3,15 1.5,11.5 Z" fill="#62a84a"/><path d="M4,15.5 L8,15" stroke="#62a84a" stroke-width="1"/><path d="M7,12 L9.25,8.1 L13.75,8.1 L16,12 L13.75,15.9 L9.25,15.9Z" fill="#b4c0ca" stroke="#43474a" stroke-width="1"/><path d="M10.2,10.8 A2,2 0 1 0 12.8,10.8" fill="none" stroke="#30343a" stroke-width="1.1"/><path d="M11.5,9.3 V12" stroke="#30343a" stroke-width="1.1"/></svg>
<div class="t" style="left:112px;top:890px;color:#c5c7c9;font-size:13.5px;font-weight:400;">SeataOrderApplication</div>
<svg class="a" style="left:93px;top:909px" width="18" height="18" viewBox="0 0 18 18"><path d="M1.5,11.5 C1.5,7.5 4.5,5.5 8.5,5 C11.5,4.5 13.5,3.5 15,1.5 C16.5,4.5 16.5,8 15.5,10 L9,13 C7,15 3,15 1.5,11.5 Z" fill="#62a84a"/><path d="M4,15.5 L8,15" stroke="#62a84a" stroke-width="1"/><path d="M7,12 L9.25,8.1 L13.75,8.1 L16,12 L13.75,15.9 L9.25,15.9Z" fill="#b4c0ca" stroke="#43474a" stroke-width="1"/><path d="M10.2,10.8 A2,2 0 1 0 12.8,10.8" fill="none" stroke="#30343a" stroke-width="1.1"/><path d="M11.5,9.3 V12" stroke="#30343a" stroke-width="1.1"/></svg>
<div class="t" style="left:112px;top:910px;color:#c5c7c9;font-size:13.5px;font-weight:400;">SeataStorageApplication</div>
<svg class="a" style="left:93px;top:929px" width="18" height="18" viewBox="0 0 18 18"><path d="M1.5,11.5 C1.5,7.5 4.5,5.5 8.5,5 C11.5,4.5 13.5,3.5 15,1.5 C16.5,4.5 16.5,8 15.5,10 L9,13 C7,15 3,15 1.5,11.5 Z" fill="#62a84a"/><path d="M4,15.5 L8,15" stroke="#62a84a" stroke-width="1"/><path d="M7,12 L9.25,8.1 L13.75,8.1 L16,12 L13.75,15.9 L9.25,15.9Z" fill="#b4c0ca" stroke="#43474a" stroke-width="1"/><path d="M10.2,10.8 A2,2 0 1 0 12.8,10.8" fill="none" stroke="#30343a" stroke-width="1.1"/><path d="M11.5,9.3 V12" stroke="#30343a" stroke-width="1.1"/></svg>
<div class="t" style="left:112px;top:930px;color:#c5c7c9;font-size:13.5px;font-weight:400;">SeataTccApplication</div>
<div class="a" style="left:388px;top:578px;width:1px;height:354px;background:#2b2b2b;"></div>
<div class="t" style="left:402px;top:584px;color:#c5c7c9;font-size:11.8px;font-weight:400;">Debugger</div>
<div class="a" style="left:389px;top:604px;width:78px;height:2px;background:#8c9093;"></div>
<svg class="a" style="left:479px;top:584px" width="16" height="14" viewBox="0 0 16 14"><rect x="1" y="1" width="13" height="11" fill="#c8cacc"/><path d="M4.5,3.5 L8,6.5 L4.5,9.5" fill="none" stroke="#3c3f41" stroke-width="1.5"/></svg>
<div class="t" style="left:498px;top:584px;color:#c5c7c9;font-size:11.8px;font-weight:400;">Console</div>
<svg class="a" style="left:561px;top:583px" width="17" height="17" viewBox="0 0 17 17"><path d="M3.5,13 L9,4 L12.5,13 M3,13 L2.5,8.5 M13,13 L13.8,8.5" fill="none" stroke="#c8692a" stroke-width="1.2"/><circle cx="9.5" cy="4" r="2.7" fill="#c8692a"/><circle cx="3.8" cy="13.2" r="2.7" fill="#c8692a"/><circle cx="13" cy="13.2" r="2.7" fill="#c8692a"/></svg>
<div class="t" style="left:581px;top:584px;color:#c5c7c9;font-size:11.8px;font-weight:400;">Endpoints</div>
<svg class="a" style="left:647px;top:583px" width="16" height="16" viewBox="0 0 16 16"><rect x="2" y="3" width="12" height="2" fill="#c8cacc"/><rect x="2" y="7" width="12" height="3" fill="#3592c4"/><rect x="2" y="12.5" width="12" height="2" fill="#c8cacc"/></svg>
<div class="a" style="left:671px;top:581px;width:1px;height:20px;background:#555758;"></div>
<svg class="a" style="left:679px;top:583px" width="18" height="18" viewBox="0 0 18 18"><path d="M2,9 L6,4.5 L11,9.5" fill="none" stroke="#3592c4" stroke-width="1.5"/><path d="M9,10.5 L13.5,5.5 L14,11.5Z" fill="#3592c4"/><rect x="2" y="12" width="12" height="2" fill="#c8cacc"/></svg>
<svg class="a" style="left:705px;top:583px" width="18" height="18" viewBox="0 0 18 18"><path d="M9,1 V9" stroke="#3592c4" stroke-width="1.6"/><path d="M5,6.5 H13 L9,11Z" fill="#3592c4"/><rect x="3" y="12" width="12" height="2" fill="#c8cacc"/></svg>
<svg class="a" style="left:731px;top:583px" width="18" height="18" viewBox="0 0 18 18"><path d="M9,1 V9" stroke="#db5c5c" stroke-width="1.6"/><path d="M5,6.5 H13 L9,11Z" fill="#db5c5c"/><rect x="3" y="12" width="12" height="2" fill="#c8cacc"/></svg>
<svg class="a" style="left:757px;top:583px" width="18" height="18" viewBox="0 0 18 18"><path d="M9,5 V12" stroke="#3592c4" stroke-width="1.6"/><path d="M5,6.5 H13 L9,2Z" fill="#3592c4"/><rect x="3" y="12" width="12" height="2" fill="#c8cacc"/></svg>
<svg class="a" style="left:783px;top:583px" width="18" height="18" viewBox="0 0 18 18"><path d="M2,2 L7,7 M7,2 L2,7" stroke="#db5c5c" stroke-width="1.6"/><path d="M9,6.5 H14.5 V14.5 H6.5 V9" fill="none" stroke="#c8cacc" stroke-width="1.6"/></svg>
<svg class="a" style="left:809px;top:583px" width="18" height="18" viewBox="0 0 18 18"><path d="M2,3 L8,9" stroke="#3592c4" stroke-width="1.6"/><path d="M9.5,10.5 L3.5,9.5 L8.5,4.5Z" fill="#3592c4"/><path d="M11,8 H15 M13,8 V16 M11,16 H15" stroke="#c8cacc" stroke-width="1.1"/></svg>
<div class="a" style="left:834px;top:581px;width:1px;height:20px;background:#555758;"></div>
<svg class="a" style="left:842px;top:583px" width="18" height="18" viewBox="0 0 18 18"><rect x="3" y="2" width="12" height="14" fill="none" stroke="#c8cacc" stroke-width="1.6"/><rect x="3" y="2" width="12" height="4" fill="#c8cacc"/><path d="M3,9.5 H15 M3,12.8 H15 M7,6 V16 M11,6 V16" stroke="#c8cacc" stroke-width="1.2"/></svg>
<svg class="a" style="left:868px;top:583px" width="18" height="18" viewBox="0 0 18 18"><path d="M2,4 H7 M2,9 H16 M2,14 H7 M10,4 H16 M10,14 H16 M7,4 L10,14" stroke="#6e7072" stroke-width="1.6" fill="none"/></svg>
<svg class="a" style="left:1800px;top:584px" width="12" height="16" viewBox="0 0 12 16"><rect x="6" y="2" width="8" height="4" fill="#c8cacc"/><rect x="6" y="8" width="8" height="4" fill="#c8cacc"/></svg>
<div class="a" style="left:389px;top:605px;width:1423px;height:1px;background:#2f3133;"></div>
<div class="t" style="left:402px;top:611px;color:#c5c7c9;font-size:11.3px;font-weight:400;">Frames</div>
<div class="a" style="left:389px;top:632px;width:333px;height:1px;background:#2f3133;"></div>
<div class="a" style="left:392px;top:636px;width:245px;height:24px;border:1px solid #646464;border-radius:3px"></div>
<svg class="a" style="left:398px;top:641px" width="16" height="14" viewBox="0 0 16 14"><path d="M1.5,6.5 L5.5,10.5 L13,2.5" fill="none" stroke="#e07a35" stroke-width="2.2"/></svg>
<div class="t" style="left:418px;top:641px;color:#c5c7c9;font-size:13.1px;font-weight:400;">"main"@1 in g...ain": RUNNING</div>
<svg class="a" style="left:619px;top:644px" width="13" height="8" viewBox="0 0 13 8"><path d="M1,1 H12 L6.5,7Z" fill="#b4b6b8"/></svg>
<svg class="a" style="left:647px;top:640px" width="16" height="16" viewBox="0 0 16 16"><path d="M8,2 V15 M3,7 L8,2 L13,7" fill="none" stroke="#606264" stroke-width="1.7"/></svg>
<svg class="a" style="left:673px;top:640px" width="16" height="16" viewBox="0 0 16 16"><path d="M8,1 V14 M3,9 L8,14 L13,9" fill="none" stroke="#c8cacc" stroke-width="1.7"/></svg>
<svg class="a" style="left:699px;top:640px" width="16" height="16" viewBox="0 0 16 16"><path d="M1,1.5 H15 L9.5,8 V15 L6.5,13 V8Z" fill="#c8cacc"/></svg>
<div class="a" style="left:389px;top:665px;width:319px;height:267px;background:#5c584b;"></div>
<div class="a" style="left:389px;top:665px;width:319px;height:20px;background:#3574d4;"></div>
<div class="a" style="left:389px;top:665px;width:319px;height:267px;overflow:hidden"><div class="t" style="left:16px;top:3px;color:#ffffff;font-size:13.5px">invokeBeanFactoryPostProcessors:82, PostProcessorRegistrationDelegate <i>(org.springframework.context.support)</i></div><div class="t" style="left:16px;top:23px;color:#999791;font-size:13.5px">invokeBeanFactoryPostProcessors:705, AbstractApplicationContext <i>(org.springframework.context.support)</i></div><div class="t" style="left:16px;top:43px;color:#999791;font-size:13.5px">refresh:531, AbstractApplicationContext <i>(org.springframework.context.support)</i></div><div class="t" style="left:16px;top:63px;color:#999791;font-size:13.5px">refresh:744, SpringApplication <i>(org.springframework.boot)</i></div><div class="t" style="left:16px;top:83px;color:#999791;font-size:13.5px">refreshContext:391, SpringApplication <i>(org.springframework.boot)</i></div><div class="t" style="left:16px;top:103px;color:#999791;font-size:13.5px">run:312, SpringApplication <i>(org.springframework.boot)</i></div><div class="t" style="left:16px;top:123px;color:#999791;font-size:13.5px">run:140, SpringApplicationBuilder <i>(org.springframework.boot.builder)</i></div><div class="t" style="left:16px;top:143px;color:#999791;font-size:13.5px">bootstrapServiceContext:209, BootstrapApplicationListener <i>(org.springframework.cloud)</i></div><div class="t" style="left:16px;top:163px;color:#999791;font-size:13.5px">onApplicationEvent:114, BootstrapApplicationListener <i>(org.springframework.cloud)</i></div><div class="t" style="left:16px;top:183px;color:#999791;font-size:13.5px">onApplicationEvent:71, BootstrapApplicationListener <i>(org.springframework.cloud)</i></div><div class="t" style="left:16px;top:203px;color:#999791;font-size:13.5px">doInvokeListener:172, SimpleApplicationEventMulticaster <i>(org.springframework)</i></div><div class="t" style="left:16px;top:223px;color:#999791;font-size:13.5px">invokeListener:165, SimpleApplicationEventMulticaster <i>(org.springframework)</i></div><div class="t" style="left:16px;top:243px;color:#999791;font-size:13.5px">multicastEvent:139, SimpleApplicationEventMulticaster <i>(org.springframework)</i></div><div class="t" style="left:16px;top:263px;color:#999791;font-size:13.5px">multicastEvent:127, SimpleApplicationEventMulticaster <i>(org.springframework)</i></div></div>
<div class="a" style="left:711px;top:668px;width:8px;height:252px;border-radius:4px;background:#5c5e60"></div>
<div class="a" style="left:722px;top:605px;width:1px;height:327px;background:#2b2b2b;"></div>
<div class="t" style="left:737px;top:611px;color:#c5c7c9;font-size:11.3px;font-weight:400;">Variables</div>
<div class="a" style="left:723px;top:632px;width:1089px;height:1px;background:#2f3133;"></div>
<div class="a" style="left:747px;top:633px;width:1px;height:299px;background:#2f3133;"></div>
<svg class="a" style="left:727px;top:638px" width="16" height="16" viewBox="0 0 16 16"><path d="M8,2 V14 M2,8 H14" stroke="#c8cacc" stroke-width="1.8"/></svg>
<div class="a" style="left:729px;top:671px;width:12px;height:2px;background:#606264;"></div>
<svg class="a" style="left:727px;top:691px" width="16" height="12" viewBox="0 0 16 12"><path d="M1.5,10 L8,2.5 L14.5,10Z" fill="#606264"/></svg>
<svg class="a" style="left:727px;top:718px" width="16" height="12" viewBox="0 0 16 12"><path d="M1.5,2 L8,9.5 L14.5,2Z" fill="#606264"/></svg>
<svg class="a" style="left:727px;top:741px" width="17" height="17" viewBox="0 0 17 17"><path d="M2,11 V3 H10" fill="none" stroke="#c8cacc" stroke-width="1.3"/><rect x="5" y="5.5" width="10" height="10" fill="#c8cacc"/><path d="M7,8.5 H13 M7,11 H13 M7,13.5 H13" stroke="#3c3f41" stroke-width="1"/></svg>
<div class="a" style="left:724px;top:765px;width:22px;height:22px;border-radius:3px;background:#5a5d60"></div>
<svg class="a" style="left:726px;top:769px" width="18" height="14" viewBox="0 0 18 14"><path d="M1,6 H17" stroke="#c8cacc" stroke-width="1.4"/><rect x="1.5" y="6" width="6" height="5" rx="2.5" fill="none" stroke="#c8cacc" stroke-width="1.5"/><rect x="10.5" y="6" width="6" height="5" rx="2.5" fill="none" stroke="#c8cacc" stroke-width="1.5"/></svg>
<div class="a" style="left:748px;top:754px;width:1063px;height:20px;background:#0a2d46;"></div>
<svg class="a" style="left:755px;top:639px" width="8" height="10" viewBox="0 0 8 10"><path d="M1.5,1 L5.5,5 L1.5,9" fill="none" stroke="#c8cacc" stroke-width="1.2"/></svg>
<svg class="a" style="left:772px;top:636px" width="16" height="16" viewBox="0 0 16 16"><circle cx="8" cy="8" r="7.3" fill="#b8913f"/><path d="M6,13 V5.2" stroke="#2f2a20" stroke-width="1.1"/><circle cx="8.2" cy="7.6" r="2.3" fill="none" stroke="#2f2a20" stroke-width="1.1"/></svg>
<div class="a" style="left:791px;top:634px;width:991px;height:20px;overflow:hidden"><div class="t" style="left:0px;top:3px;color:#c5c7c9;font-size:13.5px;font-weight:400;"><span style="color:#f08c8c">beanFactory</span> = <span style="color:#909090">{DefaultListableBeanFactory@4066}</span> &quot;org.springframework.beans.factory.support.DefaultListableBeanFactory@33aeca0b: defining beans [org.springframework.context.annotation.internalConfigurationAnnotationProcessor</div></div>
<div class="t" style="left:1782px;top:637px;color:#5c8fd0;font-size:13.5px;font-weight:400;">... View</div>
<svg class="a" style="left:755px;top:659px" width="8" height="10" viewBox="0 0 8 10"><path d="M1.5,1 L5.5,5 L1.5,9" fill="none" stroke="#c8cacc" stroke-width="1.2"/></svg>
<svg class="a" style="left:772px;top:656px" width="16" height="16" viewBox="0 0 16 16"><circle cx="8" cy="8" r="7.3" fill="#b8913f"/><path d="M6,13 V5.2" stroke="#2f2a20" stroke-width="1.1"/><circle cx="8.2" cy="7.6" r="2.3" fill="none" stroke="#2f2a20" stroke-width="1.1"/></svg>
<div class="a" style="left:791px;top:654px;width:1100px;height:20px;overflow:hidden"><div class="t" style="left:0px;top:3px;color:#c5c7c9;font-size:13.5px;font-weight:400;"><span style="color:#f08c8c">beanFactoryPostProcessors</span> = <span style="color:#909090">{ArrayList@4185}</span>  size = 3</div></div>
<svg class="a" style="left:774px;top:677px" width="14" height="14" viewBox="0 0 14 14"><rect x="1" y="1" width="11" height="2.6" fill="#c09a48"/><rect x="1" y="5.5" width="11" height="2.6" fill="#c09a48"/><rect x="1" y="10" width="11" height="2.6" fill="#c09a48"/></svg>
<div class="a" style="left:791px;top:674px;width:1100px;height:20px;overflow:hidden"><div class="t" style="left:0px;top:3px;color:#c5c7c9;font-size:13.5px;font-weight:400;"><span style="color:#f08c8c">processedBeans</span> = <span style="color:#909090">{HashSet@4269}</span>  size = 0</div></div>
<svg class="a" style="left:755px;top:699px" width="8" height="10" viewBox="0 0 8 10"><path d="M1.5,1 L5.5,5 L1.5,9" fill="none" stroke="#c8cacc" stroke-width="1.2"/></svg>
<svg class="a" style="left:774px;top:697px" width="14" height="14" viewBox="0 0 14 14"><rect x="1" y="1" width="11" height="2.6" fill="#c09a48"/><rect x="1" y="5.5" width="11" height="2.6" fill="#c09a48"/><rect x="1" y="10" width="11" height="2.6" fill="#c09a48"/></svg>
<div class="a" style="left:791px;top:694px;width:991px;height:20px;overflow:hidden"><div class="t" style="left:0px;top:3px;color:#c5c7c9;font-size:13.5px;font-weight:400;"><span style="color:#f08c8c">registry</span> = <span style="color:#909090">{DefaultListableBeanFactory@4066}</span> &quot;org.springframework.beans.factory.support.DefaultListableBeanFactory@33aeca0b: defining beans [org.springframework.context.annotation.internalConfigurationAnnotationProcessor</div></div>
<div class="t" style="left:1782px;top:697px;color:#5c8fd0;font-size:13.5px;font-weight:400;">... View</div>
<svg class="a" style="left:754px;top:720px" width="10" height="8" viewBox="0 0 10 8"><path d="M1,1.5 L5,5.5 L9,1.5" fill="none" stroke="#c8cacc" stroke-width="1.2"/></svg>
<svg class="a" style="left:774px;top:717px" width="14" height="14" viewBox="0 0 14 14"><rect x="1" y="1" width="11" height="2.6" fill="#c09a48"/><rect x="1" y="5.5" width="11" height="2.6" fill="#c09a48"/><rect x="1" y="10" width="11" height="2.6" fill="#c09a48"/></svg>
<div class="a" style="left:791px;top:714px;width:1100px;height:20px;overflow:hidden"><div class="t" style="left:0px;top:3px;color:#c5c7c9;font-size:13.5px;font-weight:400;"><span style="color:#f08c8c">regularPostProcessors</span> = <span style="color:#909090">{ArrayList@4274}</span>  size = 1</div></div>
<svg class="a" style="left:773px;top:739px" width="8" height="10" viewBox="0 0 8 10"><path d="M1.5,1 L5.5,5 L1.5,9" fill="none" stroke="#c8cacc" stroke-width="1.2"/></svg>
<svg class="a" style="left:792px;top:737px" width="14" height="14" viewBox="0 0 14 14"><rect x="1" y="1" width="11" height="2.6" fill="#c09a48"/><rect x="1" y="5.5" width="11" height="2.6" fill="#c09a48"/><rect x="1" y="10" width="11" height="2.6" fill="#c09a48"/></svg>
<div class="a" style="left:809px;top:734px;width:1100px;height:20px;overflow:hidden"><div class="t" style="left:0px;top:3px;color:#c5c7c9;font-size:13.5px;font-weight:400;"><span style="color:#f08c8c">0</span> = <span style="color:#909090">{ConfigFileApplicationListener$PropertySourceOrderingPostProcessor@4252}</span></div></div>
<svg class="a" style="left:754px;top:760px" width="10" height="8" viewBox="0 0 10 8"><path d="M1,1.5 L5,5.5 L9,1.5" fill="none" stroke="#c8cacc" stroke-width="1.2"/></svg>
<svg class="a" style="left:774px;top:757px" width="14" height="14" viewBox="0 0 14 14"><rect x="1" y="1" width="11" height="2.6" fill="#c09a48"/><rect x="1" y="5.5" width="11" height="2.6" fill="#c09a48"/><rect x="1" y="10" width="11" height="2.6" fill="#c09a48"/></svg>
<div class="a" style="left:791px;top:754px;width:1100px;height:20px;overflow:hidden"><div class="t" style="left:0px;top:3px;color:#c5c7c9;font-size:13.5px;font-weight:400;"><span style="color:#f08c8c">registryProcessors</span> = <span style="color:#909090">{ArrayList@4277}</span>  size = 2</div></div>
<svg class="a" style="left:773px;top:779px" width="8" height="10" viewBox="0 0 8 10"><path d="M1.5,1 L5.5,5 L1.5,9" fill="none" stroke="#c8cacc" stroke-width="1.2"/></svg>
<svg class="a" style="left:792px;top:777px" width="14" height="14" viewBox="0 0 14 14"><rect x="1" y="1" width="11" height="2.6" fill="#c09a48"/><rect x="1" y="5.5" width="11" height="2.6" fill="#c09a48"/><rect x="1" y="10" width="11" height="2.6" fill="#c09a48"/></svg>
<div class="a" style="left:809px;top:774px;width:1100px;height:20px;overflow:hidden"><div class="t" style="left:0px;top:3px;color:#c5c7c9;font-size:13.5px;font-weight:400;"><span style="color:#f08c8c">0</span> = <span style="color:#909090">{SharedMetadataReaderFactoryContextInitializer$CachingMetadataReaderFactoryPostProcessor@4250}</span></div></div>
<svg class="a" style="left:773px;top:799px" width="8" height="10" viewBox="0 0 8 10"><path d="M1.5,1 L5.5,5 L1.5,9" fill="none" stroke="#c8cacc" stroke-width="1.2"/></svg>
<svg class="a" style="left:792px;top:797px" width="14" height="14" viewBox="0 0 14 14"><rect x="1" y="1" width="11" height="2.6" fill="#c09a48"/><rect x="1" y="5.5" width="11" height="2.6" fill="#c09a48"/><rect x="1" y="10" width="11" height="2.6" fill="#c09a48"/></svg>
<div class="a" style="left:809px;top:794px;width:1100px;height:20px;overflow:hidden"><div class="t" style="left:0px;top:3px;color:#c5c7c9;font-size:13.5px;font-weight:400;"><span style="color:#f08c8c">1</span> = <span style="color:#909090">{ConfigurationWarningsApplicationContextInitializer$ConfigurationWarningsPostProcessor@4251}</span></div></div>
<div class="a" style="left:745px;top:707px;width:774px;height:136px;border:3px solid #fe0420;border-radius:5px"></div>
<svg class="a" style="left:0;top:0" width="1812" height="932"><path d="M711.2,451.9 L732.8,472.5 L724.1,472.8 L779.5,693 L774,693 L710.6,476.4 L702.2,480.9Z" fill="#02b6f1"/><circle cx="776.75" cy="693" r="2.75" fill="#02b6f1"/></svg>
<div class="a" style="left:1811px;top:24px;width:1px;height:908px;background:#9a9a9a;"></div></body></html>
